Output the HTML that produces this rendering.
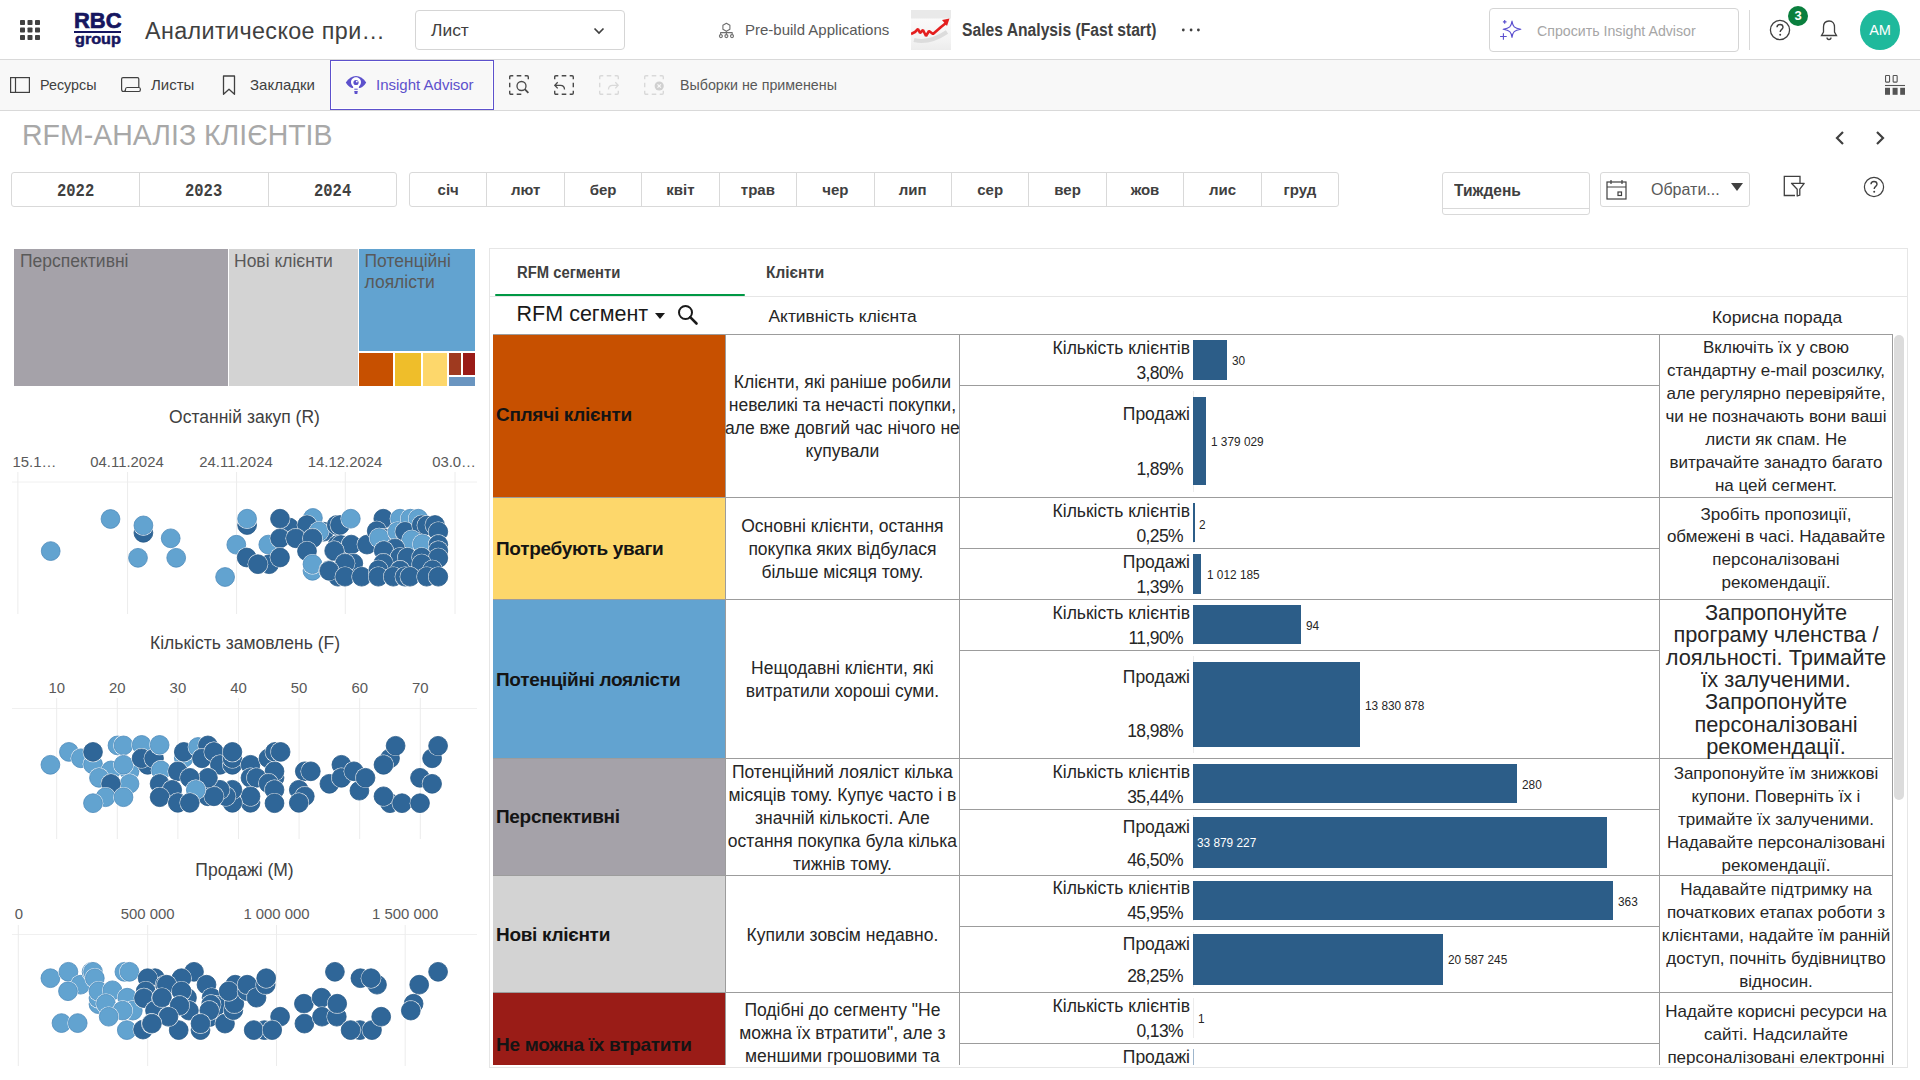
<!DOCTYPE html>
<html><head><meta charset="utf-8">
<style>
*{box-sizing:border-box;margin:0;padding:0}
html,body{width:1920px;height:1080px;overflow:hidden;background:#fff;font-family:"Liberation Sans",sans-serif;color:#404040}
.a{position:absolute;white-space:nowrap}
#hdr{position:absolute;left:0;top:0;width:1920px;height:60px;background:#fff;border-bottom:1px solid #d9d9d9}
#tb{position:absolute;left:0;top:60px;width:1920px;height:51px;background:#f8f8f8;border-bottom:1px solid #d9d9d9}
.btn{position:absolute;border:1px solid #d5d5d5;border-radius:4px;background:#fff}
.seg{position:absolute;top:172px;height:35px;border:1px solid #d9d9d9;border-radius:3px;background:#fff;display:flex}
.seg div{flex:1;border-left:1px solid #d9d9d9;text-align:center;font-weight:bold;font-size:15px;line-height:33px;color:#404040}
.seg div:first-child{border-left:none}
.yr span{display:inline-block;font-family:'Liberation Mono',monospace;font-size:18px;transform:scaleX(0.86) translateY(1px)}
</style></head><body>

<div id="hdr">
  <!-- grid icon -->
  <svg class="a" style="left:20px;top:20px" width="20" height="20" viewBox="0 0 20 20">
    <g fill="#404040">
      <rect x="0" y="0" width="5" height="5" rx="0.8"/><rect x="7.5" y="0" width="5" height="5" rx="0.8"/><rect x="15" y="0" width="5" height="5" rx="0.8"/>
      <rect x="0" y="7.5" width="5" height="5" rx="0.8"/><rect x="7.5" y="7.5" width="5" height="5" rx="0.8"/><rect x="15" y="7.5" width="5" height="5" rx="0.8"/>
      <rect x="0" y="15" width="5" height="5" rx="0.8"/><rect x="7.5" y="15" width="5" height="5" rx="0.8"/><rect x="15" y="15" width="5" height="5" rx="0.8"/>
    </g>
  </svg>
  <!-- RBC logo -->
  <div class="a" style="left:73.5px;top:10px;font-weight:bold;color:#161660;font-size:22.6px;line-height:22px;-webkit-text-stroke:0.7px #161660;transform:scaleX(0.97);transform-origin:0 0">RBC</div>
  <div class="a" style="left:74px;top:31px;width:47px;height:2px;background:#161660"></div>
  <div class="a" style="left:74.5px;top:31px;font-weight:bold;color:#161660;font-size:15px;line-height:15px;-webkit-text-stroke:0.5px #161660;transform:scaleX(1.08);transform-origin:0 0">group</div>
  <div class="a" style="left:145px;top:19.5px;font-size:23.3px;line-height:23.3px;letter-spacing:0.4px;color:#404040">Аналитическое при…</div>
  <!-- Лист dropdown -->
  <div class="btn" style="left:415px;top:10px;width:210px;height:40px"></div>
  <div class="a" style="left:431px;top:21.7px;font-size:17.4px;line-height:17.4px;color:#404040">Лист</div>
  <svg class="a" style="left:593px;top:26px" width="12" height="10" viewBox="0 0 12 10"><path d="M1.5 2.5 L6 7 L10.5 2.5" stroke="#404040" stroke-width="1.7" fill="none"/></svg>
  <!-- prebuild -->
  <svg class="a" style="left:716px;top:20px" width="20" height="20" viewBox="0 0 20 20"><g fill="none" stroke="#6e6e6e" stroke-width="1.1" stroke-linejoin="round"><path d="M10.4 3.2L13.9 5.2V9.2L10.4 11.2L6.9 9.2V5.2Z"/><path d="M10.4 11.2V14.6M4.6 14.6V12.6H16.2V14.6"/><circle cx="4.9" cy="16.1" r="1.5"/><circle cx="10.4" cy="16.1" r="1.5"/><circle cx="16" cy="16.1" r="1.5"/></g></svg>
  <div class="a" style="left:745px;top:21px;font-size:15px;color:#595959">Pre-build Applications</div>
  <!-- thumbnail -->
  <div class="a" style="left:911px;top:10px;width:40px;height:40px;background:linear-gradient(#e9e9e9 0,#e9e9e9 8px,#fafafa 9px,#f3f3f3 30px,#ececec 40px)"></div>
  <svg class="a" style="left:911px;top:10px" width="40" height="40" viewBox="0 0 40 40"><path d="M3 30 Q18 34 36 22" stroke="#dcdcdc" stroke-width="4" fill="none"/><path d="M0 24 L4 22 L7 19 L9 23 L12 20 L15 26 L18 21 L22 24 L30 17 L35 13" stroke="#e41f1f" stroke-width="2.6" fill="none" stroke-linejoin="bevel"/><path d="M31 10 L38.5 8.5 L36 16 Z" fill="#e41f1f"/></svg>
  <div class="a" style="left:962px;top:21px;font-size:18px;line-height:18px;font-weight:bold;color:#404040;transform:scaleX(0.87);transform-origin:0 0">Sales Analysis (Fast start)</div>
  <svg class="a" style="left:1178px;top:25px" width="26" height="10" viewBox="0 0 26 10"><circle cx="5.3" cy="5" r="1.4" fill="#404040"/><circle cx="13.1" cy="5" r="1.4" fill="#404040"/><circle cx="20.4" cy="5" r="1.4" fill="#404040"/></svg>
  <!-- search -->
  <div class="btn" style="left:1489px;top:8px;width:250px;height:44px"></div>
  <svg class="a" style="left:1499px;top:19px" width="26" height="22" viewBox="0 0 26 22"><path d="M13 2.1 C13.8 7.6 15.2 9.3 21.8 10.3 C15.2 11.3 13.8 13 13 18.5 C12.2 13 10.8 11.3 4.2 10.3 C10.8 9.3 12.2 7.6 13 2.1 Z" fill="none" stroke="#5b4fcf" stroke-width="1.1" stroke-linejoin="round"/><path d="M4.4 14.2V20.8M1.1 17.5H7.7" stroke="#5b4fcf" stroke-width="1.1"/><path d="M5.7 1.1V4.7M3.9 2.9H7.5" stroke="#5b4fcf" stroke-width="1.1"/></svg>
  <div class="a" style="left:1536.5px;top:22px;font-size:15px;color:#a6a6a6;transform:scaleX(0.945);transform-origin:0 0">Спросить Insight Advisor</div>
  <div class="a" style="left:1749px;top:10px;width:1px;height:40px;background:#d9d9d9"></div>
  <svg class="a" style="left:1769px;top:19px" width="22" height="22" viewBox="0 0 22 22"><circle cx="11" cy="11" r="9.6" fill="none" stroke="#404040" stroke-width="1.3"/><path d="M8 8.3 C8 6.3 9.5 5.5 11 5.5 C12.7 5.5 14 6.6 14 8.2 C14 10.3 11.2 10.5 11.2 13" fill="none" stroke="#404040" stroke-width="1.4"/><circle cx="11.2" cy="15.8" r="1" fill="#404040"/></svg>
  <div class="a" style="left:1788px;top:6px;width:20px;height:20px;border-radius:10px;background:#0a7f3e;color:#fff;font-size:13px;font-weight:bold;text-align:center;line-height:20px">3</div>
  <svg class="a" style="left:1819px;top:19px" width="20" height="22" viewBox="0 0 20 22"><path d="M10 2 C6 2 4.5 5 4.5 8 V13 L2.5 16.5 H17.5 L15.5 13 V8 C15.5 5 14 2 10 2Z" fill="none" stroke="#404040" stroke-width="1.3"/><path d="M8 18.5 C8 20 9 20.5 10 20.5 C11 20.5 12 20 12 18.5" fill="none" stroke="#404040" stroke-width="1.3"/></svg>
  <div class="a" style="left:1860px;top:10px;width:40px;height:40px;border-radius:20px;background:#1fb99c;color:#fff;font-size:14.5px;text-align:center;line-height:40px">AM</div>
</div>

<div id="tb">
  <svg class="a" style="left:10px;top:17px" width="20" height="16" viewBox="0 0 20 16"><rect x="0.6" y="0.6" width="18.8" height="14.8" fill="none" stroke="#404040" stroke-width="1.2"/><path d="M5.5 0.6V15.4" stroke="#404040" stroke-width="1.2"/></svg>
  <div class="a" style="left:39.5px;top:16px;font-size:15px;color:#404040;transform:scaleX(0.955);transform-origin:0 0">Ресурсы</div>
  <svg class="a" style="left:121px;top:17px" width="20" height="16" viewBox="0 0 20 16"><path d="M2.5 14.5 C1 14.5 0.6 13.5 0.6 12 V2 C0.6 1 1.2 0.6 2 0.6 H16.5 C17.5 0.6 17.8 1.2 17.8 2 V10.5 M2.5 14.5 H18 C19 14.5 19.4 14 19.4 12.5 C19.4 11 19 10.5 18 10.5 H6 C5 10.5 4.5 11 4.5 12.5 C4.5 14 4 14.5 2.5 14.5" fill="none" stroke="#404040" stroke-width="1.2"/></svg>
  <div class="a" style="left:151px;top:16px;font-size:15px;color:#404040">Листы</div>
  <svg class="a" style="left:221px;top:15px" width="16" height="22" viewBox="0 0 16 22"><path d="M2.5 1H13.5V19.3L8 14.3L2.5 19.3Z" fill="none" stroke="#404040" stroke-width="1.3" stroke-linejoin="round"/></svg>
  <div class="a" style="left:250px;top:16px;font-size:15px;color:#404040">Закладки</div>
  <div class="a" style="left:330px;top:0px;width:164px;height:50px;border:1px solid #5d51cc;box-shadow:inset 0 0 0 1px #fff;background:#f8f8f8"></div>
  <svg class="a" style="left:345px;top:14px" width="22" height="22" viewBox="0 0 22 22"><path d="M0.8 8.5 C3.5 4.5 7 2 11 2 C15 2 18.5 4.5 21.2 8.5 C19.5 11.5 17.5 13 15 14 L7 14 C4.5 13 2.5 11.5 0.8 8.5Z" fill="#5d51cc"/><path d="M11 3.2 C14 3.2 16 5.5 16 8.3 C16 10.3 14.8 11.5 14 12.5 L13.5 15.5 L8.5 15.5 L8 12.5 C7.2 11.5 6 10.3 6 8.3 C6 5.5 8 3.2 11 3.2Z" fill="#fff"/><path d="M9.3 15.2 H12.7" stroke="#5d51cc" stroke-width="1"/><circle cx="11" cy="8.5" r="2.6" fill="#5d51cc"/><circle cx="11.8" cy="7.6" r="0.9" fill="#fff"/><path d="M9.2 17 H12.8 L12.3 20 H9.7Z" fill="#5d51cc"/></svg>
  <div class="a" style="left:376px;top:16px;font-size:15px;color:#5d51cc">Insight Advisor</div>
  <g></g>
  <svg class="a" style="left:509px;top:15px;position:absolute" width="22" height="22" viewBox="0 0 22 22"><path d="M0.7 4.3V1.9Q0.7 0.7 1.9 0.7H4.3M7.7 0.7H12.299999999999999M15.700000000000001 0.7H18.1Q19.3 0.7 19.3 1.9V4.3M7.7 19.3H12.299999999999999M4.3 19.3H1.9Q0.7 19.3 0.7 18.1V15.700000000000001M0.7 7.7V12.299999999999999" fill="none" stroke="#4a4a4a" stroke-width="1.4"/><circle cx="12.5" cy="11" r="4.5" fill="none" stroke="#4a4a4a" stroke-width="1.3"/><path d="M15.7 14.2L19.4 17.9" stroke="#4a4a4a" stroke-width="1.8"/></svg>
  <svg class="a" style="left:554px;top:15px;position:absolute" width="22" height="22" viewBox="0 0 22 22"><path d="M0.7 4.3V1.9Q0.7 0.7 1.9 0.7H4.3M7.7 0.7H12.299999999999999M15.700000000000001 0.7H18.1Q19.3 0.7 19.3 1.9V4.3M19.3 7.7V12.299999999999999M19.3 15.700000000000001V18.1Q19.3 19.3 18.1 19.3H15.700000000000001M7.7 19.3H12.299999999999999M4.3 19.3H1.9Q0.7 19.3 0.7 18.1V15.700000000000001" fill="none" stroke="#4a4a4a" stroke-width="1.4"/><path d="M3.7 7.3L0.8 10.3L3.7 13.4M0.8 10.3H6.5C8.5 10.3 10.5 11.5 10.5 14.5" fill="none" stroke="#4a4a4a" stroke-width="1.3"/></svg>
  <svg class="a" style="left:599px;top:15px;position:absolute" width="22" height="22" viewBox="0 0 22 22"><path d="M0.7 4.3V1.9Q0.7 0.7 1.9 0.7H4.3M7.7 0.7H12.299999999999999M15.700000000000001 0.7H18.1Q19.3 0.7 19.3 1.9V4.3M19.3 15.700000000000001V18.1Q19.3 19.3 18.1 19.3H15.700000000000001M7.7 19.3H12.299999999999999M4.3 19.3H1.9Q0.7 19.3 0.7 18.1V15.700000000000001M0.7 7.7V12.299999999999999" fill="none" stroke="#d9d9d9" stroke-width="1.4"/><path d="M16.3 7.3L19.2 10.3L16.3 13.4M19.2 10.3H13.5C11.5 10.3 9.5 11.5 9.5 14.5" fill="none" stroke="#d9d9d9" stroke-width="1.3"/></svg>
  <svg class="a" style="left:644px;top:15px;position:absolute" width="22" height="22" viewBox="0 0 22 22"><path d="M0.7 4.3V1.9Q0.7 0.7 1.9 0.7H4.3M7.7 0.7H12.299999999999999M15.700000000000001 0.7H18.1Q19.3 0.7 19.3 1.9V4.3M19.3 15.700000000000001V18.1Q19.3 19.3 18.1 19.3H15.700000000000001M7.7 19.3H12.299999999999999M4.3 19.3H1.9Q0.7 19.3 0.7 18.1V15.700000000000001M0.7 7.7V12.299999999999999" fill="none" stroke="#d9d9d9" stroke-width="1.4"/><circle cx="15.2" cy="11" r="4.6" fill="#d0d0d0"/><path d="M13.5 9.3L16.9 12.7M16.9 9.3L13.5 12.7" stroke="#f8f8f8" stroke-width="1.2"/></svg>
  <div class="a" style="left:680px;top:16px;font-size:15px;color:#595959;transform:scaleX(0.95);transform-origin:0 0">Выборки не применены</div>
  <svg class="a" style="left:1884px;top:14px" width="22" height="22" viewBox="0 0 22 22"><g fill="none" stroke="#555" stroke-width="1.1"><rect x="1.55" y="1.55" width="4" height="6.6" rx="0.6"/><rect x="9.15" y="1.55" width="4" height="6.6" rx="0.6"/></g><path d="M1 11.5H21" stroke="#555" stroke-width="1.1"/><g fill="#555"><rect x="1" y="13.8" width="5" height="7"/><rect x="8.6" y="13.8" width="5" height="7"/><rect x="16.2" y="13.8" width="4.8" height="7"/></g></svg>
</div>

<!-- sheet title -->
<div class="a" style="left:22px;top:118px;font-size:29.6px;color:#a8a8a8;transform:scaleX(0.962);transform-origin:0 0">RFM-АНАЛІЗ КЛІЄНТІВ</div>
<svg class="a" style="left:1833px;top:130px" width="14" height="16" viewBox="0 0 14 16"><path d="M10 2L4 8L10 14" fill="none" stroke="#404040" stroke-width="2.2"/></svg>
<svg class="a" style="left:1873px;top:130px" width="14" height="16" viewBox="0 0 14 16"><path d="M4 2L10 8L4 14" fill="none" stroke="#404040" stroke-width="2.2"/></svg>

<!-- year / month filters -->
<div class="seg" style="left:11px;width:386px">
  <div class="yr"><span>2022</span></div><div class="yr"><span>2023</span></div><div class="yr"><span>2024</span></div>
</div>
<div class="seg" style="left:409px;width:930px">
  <div>січ</div><div>лют</div><div>бер</div><div>квіт</div><div>трав</div><div>чер</div><div>лип</div><div>сер</div><div>вер</div><div>жов</div><div>лис</div><div>груд</div>
</div>

<div class="a" style="left:1442px;top:172px;width:148px;height:43px;border:1px solid #d9d9d9;border-radius:3px;background:#fff"></div>
<div class="a" style="left:1443px;top:208px;width:146px;height:1px;background:#d9d9d9"></div>
<div class="a" style="left:1454px;top:182px;font-size:16px;font-weight:bold;color:#404040;transform:scaleX(0.97);transform-origin:0 0">Тиждень</div>
<div class="a" style="left:1600px;top:172px;width:150px;height:35px;border:1px solid #d9d9d9;border-radius:3px;background:#fff"></div>
<svg class="a" style="left:1606px;top:179px" width="22" height="22" viewBox="0 0 22 22"><g fill="none" stroke="#404040" stroke-width="1.2"><rect x="1" y="3" width="19" height="17"/><path d="M1 8H20M5 1V5M16 1V5"/><rect x="12" y="13" width="3.5" height="3.5"/></g></svg>
<div class="a" style="left:1651px;top:181px;font-size:16px;color:#595959">Обрати...</div>
<svg class="a" style="left:1730px;top:182px" width="14" height="10" viewBox="0 0 14 10"><path d="M1 1H13L7 9Z" fill="#404040"/></svg>
<svg class="a" style="left:1783px;top:175px" width="24" height="24" viewBox="0 0 24 24"><path d="M17 8V1.3H1.3V20.5H12" fill="none" stroke="#404040" stroke-width="1.3"/><path d="M8.5 8.3H21.2L16.8 14.2V20.2L14.2 21V14.2Z" fill="none" stroke="#404040" stroke-width="1.3" stroke-linejoin="round"/></svg>
<svg class="a" style="left:1863px;top:176px" width="22" height="22" viewBox="0 0 22 22"><circle cx="11" cy="11" r="9.6" fill="none" stroke="#404040" stroke-width="1.2"/><path d="M8 8.3 C8 6.3 9.5 5.5 11 5.5 C12.7 5.5 14 6.6 14 8.2 C14 10.3 11.2 10.5 11.2 13" fill="none" stroke="#404040" stroke-width="1.4"/><circle cx="11.2" cy="15.8" r="1" fill="#404040"/></svg>

<div class="a" style="left:14px;top:249px;width:214px;height:137px;background:#a5a2a9;"></div>
<div class="a" style="left:229px;top:249px;width:129px;height:137px;background:#d3d3d3;"></div>
<div class="a" style="left:359px;top:249px;width:116px;height:102px;background:#62a3d0;"></div>
<div class="a" style="left:359px;top:353px;width:34px;height:33px;background:#c75000;"></div>
<div class="a" style="left:395px;top:353px;width:26px;height:33px;background:#efbe2a;"></div>
<div class="a" style="left:423px;top:353px;width:24px;height:33px;background:#fdd76b;"></div>
<div class="a" style="left:449px;top:353px;width:12px;height:22px;background:#9f3a1f;"></div>
<div class="a" style="left:463px;top:353px;width:12px;height:22px;background:#9a1b17;"></div>
<div class="a" style="left:449px;top:377px;width:26px;height:9px;background:#6a95c0;"></div>
<div class="a" style="left:20.0px;top:253.2px;font-size:17.5px;line-height:17.5px;color:#595959">Перспективні</div>
<div class="a" style="left:234.0px;top:253.2px;font-size:17.5px;line-height:17.5px;color:#595959">Нові клієнти</div>
<div class="a" style="left:364.5px;top:253.2px;font-size:17.5px;line-height:17.5px;color:#595959">Потенційні</div>
<div class="a" style="left:364.5px;top:274.2px;font-size:17.5px;line-height:17.5px;color:#595959">лоялісти</div>
<div class="a" style="left:-55.5px;width:600px;text-align:center;top:408.7px;font-size:17.5px;line-height:17.5px;color:#404040">Останній закуп (R)</div>
<div class="a" style="left:-55.0px;width:600px;text-align:center;top:635.2px;font-size:17.5px;line-height:17.5px;color:#404040">Кількість замовлень (F)</div>
<div class="a" style="left:-55.5px;width:600px;text-align:center;top:862.2px;font-size:17.5px;line-height:17.5px;color:#404040">Продажі (M)</div>
<div class="a" style="left:-173.0px;width:600px;text-align:center;top:455.1px;font-size:14.9px;line-height:14.9px;color:#595959">04.11.2024</div>
<div class="a" style="left:-64.0px;width:600px;text-align:center;top:455.1px;font-size:14.9px;line-height:14.9px;color:#595959">24.11.2024</div>
<div class="a" style="left:45.0px;width:600px;text-align:center;top:455.1px;font-size:14.9px;line-height:14.9px;color:#595959">14.12.2024</div>
<div class="a" style="left:12.5px;top:455.1px;font-size:14.9px;line-height:14.9px;color:#595959">15.1…</div>
<div class="a" style="right:1444.0px;top:455.1px;font-size:14.9px;line-height:14.9px;color:#595959">03.0…</div>
<div class="a" style="left:-243.3px;width:600px;text-align:center;top:681.4px;font-size:14.9px;line-height:14.9px;color:#595959">10</div>
<div class="a" style="left:-182.7px;width:600px;text-align:center;top:681.4px;font-size:14.9px;line-height:14.9px;color:#595959">20</div>
<div class="a" style="left:-122.1px;width:600px;text-align:center;top:681.4px;font-size:14.9px;line-height:14.9px;color:#595959">30</div>
<div class="a" style="left:-61.5px;width:600px;text-align:center;top:681.4px;font-size:14.9px;line-height:14.9px;color:#595959">40</div>
<div class="a" style="left:-0.9px;width:600px;text-align:center;top:681.4px;font-size:14.9px;line-height:14.9px;color:#595959">50</div>
<div class="a" style="left:59.7px;width:600px;text-align:center;top:681.4px;font-size:14.9px;line-height:14.9px;color:#595959">60</div>
<div class="a" style="left:120.3px;width:600px;text-align:center;top:681.4px;font-size:14.9px;line-height:14.9px;color:#595959">70</div>
<div class="a" style="left:-281.0px;width:600px;text-align:center;top:907.4px;font-size:14.9px;line-height:14.9px;color:#595959">0</div>
<div class="a" style="left:-152.3px;width:600px;text-align:center;top:907.4px;font-size:14.9px;line-height:14.9px;color:#595959">500 000</div>
<div class="a" style="left:-23.5px;width:600px;text-align:center;top:907.4px;font-size:14.9px;line-height:14.9px;color:#595959">1 000 000</div>
<div class="a" style="left:105.2px;width:600px;text-align:center;top:907.4px;font-size:14.9px;line-height:14.9px;color:#595959">1 500 000</div>
<svg class="a" style="left:0;top:0" width="490" height="1080">
<line x1="12" y1="482" x2="477" y2="482" stroke="#f0f0f0" stroke-width="1"/>
<line x1="17.9" y1="472" x2="17.9" y2="614" stroke="#ececec" stroke-width="1"/>
<line x1="127.6" y1="472" x2="127.6" y2="614" stroke="#ececec" stroke-width="1"/>
<line x1="236.6" y1="472" x2="236.6" y2="614" stroke="#ececec" stroke-width="1"/>
<line x1="345.3" y1="472" x2="345.3" y2="614" stroke="#ececec" stroke-width="1"/>
<line x1="455" y1="472" x2="455" y2="614" stroke="#ececec" stroke-width="1"/>
<line x1="12" y1="708.5" x2="477" y2="708.5" stroke="#f0f0f0" stroke-width="1"/>
<line x1="56.7" y1="698" x2="56.7" y2="839" stroke="#ececec" stroke-width="1"/>
<line x1="117.30000000000001" y1="698" x2="117.30000000000001" y2="839" stroke="#ececec" stroke-width="1"/>
<line x1="177.9" y1="698" x2="177.9" y2="839" stroke="#ececec" stroke-width="1"/>
<line x1="238.5" y1="698" x2="238.5" y2="839" stroke="#ececec" stroke-width="1"/>
<line x1="299.1" y1="698" x2="299.1" y2="839" stroke="#ececec" stroke-width="1"/>
<line x1="359.7" y1="698" x2="359.7" y2="839" stroke="#ececec" stroke-width="1"/>
<line x1="420.3" y1="698" x2="420.3" y2="839" stroke="#ececec" stroke-width="1"/>
<line x1="12" y1="934.5" x2="477" y2="934.5" stroke="#f0f0f0" stroke-width="1"/>
<line x1="18.3" y1="925" x2="18.3" y2="1066" stroke="#ececec" stroke-width="1"/>
<line x1="147.7" y1="925" x2="147.7" y2="1066" stroke="#ececec" stroke-width="1"/>
<line x1="276.5" y1="925" x2="276.5" y2="1066" stroke="#ececec" stroke-width="1"/>
<line x1="405.2" y1="925" x2="405.2" y2="1066" stroke="#ececec" stroke-width="1"/>
<circle cx="50.7" cy="551.1" r="10.3" fill="#fff"/><circle cx="50.7" cy="551.1" r="9.4" fill="#62a3d0" stroke="#4f8cbb" stroke-width="0.8"/>
<circle cx="110.5" cy="519" r="10.3" fill="#fff"/><circle cx="110.5" cy="519" r="9.4" fill="#62a3d0" stroke="#4f8cbb" stroke-width="0.8"/>
<circle cx="143.4" cy="532.8" r="10.3" fill="#fff"/><circle cx="143.4" cy="532.8" r="9.4" fill="#2f6698" stroke="#285a88" stroke-width="0.8"/>
<circle cx="143.4" cy="525.4" r="10.3" fill="#fff"/><circle cx="143.4" cy="525.4" r="9.4" fill="#62a3d0" stroke="#4f8cbb" stroke-width="0.8"/>
<circle cx="170.7" cy="538.3" r="10.3" fill="#fff"/><circle cx="170.7" cy="538.3" r="9.4" fill="#62a3d0" stroke="#4f8cbb" stroke-width="0.8"/>
<circle cx="138" cy="557.8" r="10.3" fill="#fff"/><circle cx="138" cy="557.8" r="9.4" fill="#62a3d0" stroke="#4f8cbb" stroke-width="0.8"/>
<circle cx="176.2" cy="557.8" r="10.3" fill="#fff"/><circle cx="176.2" cy="557.8" r="9.4" fill="#62a3d0" stroke="#4f8cbb" stroke-width="0.8"/>
<circle cx="225.1" cy="577" r="10.3" fill="#fff"/><circle cx="225.1" cy="577" r="9.4" fill="#62a3d0" stroke="#4f8cbb" stroke-width="0.8"/>
<circle cx="236.3" cy="544.7" r="10.3" fill="#fff"/><circle cx="236.3" cy="544.7" r="9.4" fill="#62a3d0" stroke="#4f8cbb" stroke-width="0.8"/>
<circle cx="247.1" cy="525" r="10.3" fill="#fff"/><circle cx="247.1" cy="525" r="9.4" fill="#2f6698" stroke="#285a88" stroke-width="0.8"/>
<circle cx="247.1" cy="518.7" r="10.3" fill="#fff"/><circle cx="247.1" cy="518.7" r="9.4" fill="#62a3d0" stroke="#4f8cbb" stroke-width="0.8"/>
<circle cx="289.2" cy="527.5" r="10.3" fill="#fff"/><circle cx="289.2" cy="527.5" r="9.4" fill="#2f6698" stroke="#285a88" stroke-width="0.8"/>
<circle cx="280" cy="518.7" r="10.3" fill="#fff"/><circle cx="280" cy="518.7" r="9.4" fill="#2f6698" stroke="#285a88" stroke-width="0.8"/>
<circle cx="312.9" cy="518" r="10.3" fill="#fff"/><circle cx="312.9" cy="518" r="9.4" fill="#62a3d0" stroke="#4f8cbb" stroke-width="0.8"/>
<circle cx="307" cy="525" r="10.3" fill="#fff"/><circle cx="307" cy="525" r="9.4" fill="#2f6698" stroke="#285a88" stroke-width="0.8"/>
<circle cx="323.75" cy="531.7" r="10.3" fill="#fff"/><circle cx="323.75" cy="531.7" r="9.4" fill="#2f6698" stroke="#285a88" stroke-width="0.8"/>
<circle cx="319" cy="531.5" r="10.3" fill="#fff"/><circle cx="319" cy="531.5" r="9.4" fill="#62a3d0" stroke="#4f8cbb" stroke-width="0.8"/>
<circle cx="336.7" cy="525" r="10.3" fill="#fff"/><circle cx="336.7" cy="525" r="9.4" fill="#2f6698" stroke="#285a88" stroke-width="0.8"/>
<circle cx="268.3" cy="544.6" r="10.3" fill="#fff"/><circle cx="268.3" cy="544.6" r="9.4" fill="#62a3d0" stroke="#4f8cbb" stroke-width="0.8"/>
<circle cx="280" cy="538.3" r="10.3" fill="#fff"/><circle cx="280" cy="538.3" r="9.4" fill="#2f6698" stroke="#285a88" stroke-width="0.8"/>
<circle cx="295.8" cy="538.3" r="10.3" fill="#fff"/><circle cx="295.8" cy="538.3" r="9.4" fill="#2f6698" stroke="#285a88" stroke-width="0.8"/>
<circle cx="312.5" cy="538.3" r="10.3" fill="#fff"/><circle cx="312.5" cy="538.3" r="9.4" fill="#2f6698" stroke="#285a88" stroke-width="0.8"/>
<circle cx="246.7" cy="557.5" r="10.3" fill="#fff"/><circle cx="246.7" cy="557.5" r="9.4" fill="#2f6698" stroke="#285a88" stroke-width="0.8"/>
<circle cx="269.2" cy="564.2" r="10.3" fill="#fff"/><circle cx="269.2" cy="564.2" r="9.4" fill="#2f6698" stroke="#285a88" stroke-width="0.8"/>
<circle cx="257.9" cy="564.2" r="10.3" fill="#fff"/><circle cx="257.9" cy="564.2" r="9.4" fill="#2f6698" stroke="#285a88" stroke-width="0.8"/>
<circle cx="280" cy="557.5" r="10.3" fill="#fff"/><circle cx="280" cy="557.5" r="9.4" fill="#2f6698" stroke="#285a88" stroke-width="0.8"/>
<circle cx="307" cy="551.25" r="10.3" fill="#fff"/><circle cx="307" cy="551.25" r="9.4" fill="#2f6698" stroke="#285a88" stroke-width="0.8"/>
<circle cx="312.5" cy="570.8" r="10.3" fill="#fff"/><circle cx="312.5" cy="570.8" r="9.4" fill="#62a3d0" stroke="#4f8cbb" stroke-width="0.8"/>
<circle cx="312.5" cy="564.2" r="10.3" fill="#fff"/><circle cx="312.5" cy="564.2" r="9.4" fill="#62a3d0" stroke="#4f8cbb" stroke-width="0.8"/>
<circle cx="328.75" cy="570.4" r="10.3" fill="#fff"/><circle cx="328.75" cy="570.4" r="9.4" fill="#2f6698" stroke="#285a88" stroke-width="0.8"/>
<circle cx="334.2" cy="551.25" r="10.3" fill="#fff"/><circle cx="334.2" cy="551.25" r="9.4" fill="#2f6698" stroke="#285a88" stroke-width="0.8"/>
<circle cx="337.5" cy="545" r="10.3" fill="#fff"/><circle cx="337.5" cy="545" r="9.4" fill="#2f6698" stroke="#285a88" stroke-width="0.8"/>
<circle cx="338" cy="576.7" r="10.3" fill="#fff"/><circle cx="338" cy="576.7" r="9.4" fill="#2f6698" stroke="#285a88" stroke-width="0.8"/>
<circle cx="340" cy="525" r="10.3" fill="#fff"/><circle cx="340" cy="525" r="9.4" fill="#2f6698" stroke="#285a88" stroke-width="0.8"/>
<circle cx="350.8" cy="518.7" r="10.3" fill="#fff"/><circle cx="350.8" cy="518.7" r="9.4" fill="#62a3d0" stroke="#4f8cbb" stroke-width="0.8"/>
<circle cx="340.8" cy="545" r="10.3" fill="#fff"/><circle cx="340.8" cy="545" r="9.4" fill="#2f6698" stroke="#285a88" stroke-width="0.8"/>
<circle cx="351.25" cy="544.6" r="10.3" fill="#fff"/><circle cx="351.25" cy="544.6" r="9.4" fill="#2f6698" stroke="#285a88" stroke-width="0.8"/>
<circle cx="334.2" cy="550.8" r="10.3" fill="#fff"/><circle cx="334.2" cy="550.8" r="9.4" fill="#2f6698" stroke="#285a88" stroke-width="0.8"/>
<circle cx="367" cy="544.6" r="10.3" fill="#fff"/><circle cx="367" cy="544.6" r="9.4" fill="#2f6698" stroke="#285a88" stroke-width="0.8"/>
<circle cx="353.3" cy="563.3" r="10.3" fill="#fff"/><circle cx="353.3" cy="563.3" r="9.4" fill="#2f6698" stroke="#285a88" stroke-width="0.8"/>
<circle cx="345" cy="563.3" r="10.3" fill="#fff"/><circle cx="345" cy="563.3" r="9.4" fill="#2f6698" stroke="#285a88" stroke-width="0.8"/>
<circle cx="329.2" cy="570.8" r="10.3" fill="#fff"/><circle cx="329.2" cy="570.8" r="9.4" fill="#2f6698" stroke="#285a88" stroke-width="0.8"/>
<circle cx="345" cy="576.7" r="10.3" fill="#fff"/><circle cx="345" cy="576.7" r="9.4" fill="#2f6698" stroke="#285a88" stroke-width="0.8"/>
<circle cx="361.7" cy="576.7" r="10.3" fill="#fff"/><circle cx="361.7" cy="576.7" r="9.4" fill="#2f6698" stroke="#285a88" stroke-width="0.8"/>
<circle cx="383.3" cy="518.7" r="10.3" fill="#fff"/><circle cx="383.3" cy="518.7" r="9.4" fill="#2f6698" stroke="#285a88" stroke-width="0.8"/>
<circle cx="400" cy="518.7" r="10.3" fill="#fff"/><circle cx="400" cy="518.7" r="9.4" fill="#62a3d0" stroke="#4f8cbb" stroke-width="0.8"/>
<circle cx="410.4" cy="518.7" r="10.3" fill="#fff"/><circle cx="410.4" cy="518.7" r="9.4" fill="#62a3d0" stroke="#4f8cbb" stroke-width="0.8"/>
<circle cx="418.3" cy="518.7" r="10.3" fill="#fff"/><circle cx="418.3" cy="518.7" r="9.4" fill="#62a3d0" stroke="#4f8cbb" stroke-width="0.8"/>
<circle cx="376.7" cy="531" r="10.3" fill="#fff"/><circle cx="376.7" cy="531" r="9.4" fill="#2f6698" stroke="#285a88" stroke-width="0.8"/>
<circle cx="384.2" cy="538.3" r="10.3" fill="#fff"/><circle cx="384.2" cy="538.3" r="9.4" fill="#2f6698" stroke="#285a88" stroke-width="0.8"/>
<circle cx="379.2" cy="538" r="10.3" fill="#fff"/><circle cx="379.2" cy="538" r="9.4" fill="#62a3d0" stroke="#4f8cbb" stroke-width="0.8"/>
<circle cx="397.5" cy="531.7" r="10.3" fill="#fff"/><circle cx="397.5" cy="531.7" r="9.4" fill="#62a3d0" stroke="#4f8cbb" stroke-width="0.8"/>
<circle cx="405" cy="531.7" r="10.3" fill="#fff"/><circle cx="405" cy="531.7" r="9.4" fill="#2f6698" stroke="#285a88" stroke-width="0.8"/>
<circle cx="421.7" cy="525" r="10.3" fill="#fff"/><circle cx="421.7" cy="525" r="9.4" fill="#2f6698" stroke="#285a88" stroke-width="0.8"/>
<circle cx="427" cy="525.5" r="10.3" fill="#fff"/><circle cx="427" cy="525.5" r="9.4" fill="#2f6698" stroke="#285a88" stroke-width="0.8"/>
<circle cx="435" cy="525" r="10.3" fill="#fff"/><circle cx="435" cy="525" r="9.4" fill="#2f6698" stroke="#285a88" stroke-width="0.8"/>
<circle cx="438.3" cy="531.7" r="10.3" fill="#fff"/><circle cx="438.3" cy="531.7" r="9.4" fill="#2f6698" stroke="#285a88" stroke-width="0.8"/>
<circle cx="411.7" cy="540" r="10.3" fill="#fff"/><circle cx="411.7" cy="540" r="9.4" fill="#62a3d0" stroke="#4f8cbb" stroke-width="0.8"/>
<circle cx="422.5" cy="544" r="10.3" fill="#fff"/><circle cx="422.5" cy="544" r="9.4" fill="#62a3d0" stroke="#4f8cbb" stroke-width="0.8"/>
<circle cx="438.3" cy="544.6" r="10.3" fill="#fff"/><circle cx="438.3" cy="544.6" r="9.4" fill="#2f6698" stroke="#285a88" stroke-width="0.8"/>
<circle cx="395" cy="548.3" r="10.3" fill="#fff"/><circle cx="395" cy="548.3" r="9.4" fill="#2f6698" stroke="#285a88" stroke-width="0.8"/>
<circle cx="383.75" cy="550.8" r="10.3" fill="#fff"/><circle cx="383.75" cy="550.8" r="9.4" fill="#2f6698" stroke="#285a88" stroke-width="0.8"/>
<circle cx="438.3" cy="550.8" r="10.3" fill="#fff"/><circle cx="438.3" cy="550.8" r="9.4" fill="#2f6698" stroke="#285a88" stroke-width="0.8"/>
<circle cx="400" cy="557.5" r="10.3" fill="#fff"/><circle cx="400" cy="557.5" r="9.4" fill="#2f6698" stroke="#285a88" stroke-width="0.8"/>
<circle cx="407.5" cy="557.5" r="10.3" fill="#fff"/><circle cx="407.5" cy="557.5" r="9.4" fill="#2f6698" stroke="#285a88" stroke-width="0.8"/>
<circle cx="421.7" cy="557.5" r="10.3" fill="#fff"/><circle cx="421.7" cy="557.5" r="9.4" fill="#2f6698" stroke="#285a88" stroke-width="0.8"/>
<circle cx="438.3" cy="558" r="10.3" fill="#fff"/><circle cx="438.3" cy="558" r="9.4" fill="#2f6698" stroke="#285a88" stroke-width="0.8"/>
<circle cx="383.3" cy="563.3" r="10.3" fill="#fff"/><circle cx="383.3" cy="563.3" r="9.4" fill="#2f6698" stroke="#285a88" stroke-width="0.8"/>
<circle cx="421.7" cy="564" r="10.3" fill="#fff"/><circle cx="421.7" cy="564" r="9.4" fill="#2f6698" stroke="#285a88" stroke-width="0.8"/>
<circle cx="378.3" cy="570" r="10.3" fill="#fff"/><circle cx="378.3" cy="570" r="9.4" fill="#2f6698" stroke="#285a88" stroke-width="0.8"/>
<circle cx="400" cy="570.4" r="10.3" fill="#fff"/><circle cx="400" cy="570.4" r="9.4" fill="#2f6698" stroke="#285a88" stroke-width="0.8"/>
<circle cx="432.5" cy="570" r="10.3" fill="#fff"/><circle cx="432.5" cy="570" r="9.4" fill="#2f6698" stroke="#285a88" stroke-width="0.8"/>
<circle cx="378.3" cy="576.7" r="10.3" fill="#fff"/><circle cx="378.3" cy="576.7" r="9.4" fill="#2f6698" stroke="#285a88" stroke-width="0.8"/>
<circle cx="393.3" cy="576.7" r="10.3" fill="#fff"/><circle cx="393.3" cy="576.7" r="9.4" fill="#2f6698" stroke="#285a88" stroke-width="0.8"/>
<circle cx="405" cy="576.7" r="10.3" fill="#fff"/><circle cx="405" cy="576.7" r="9.4" fill="#2f6698" stroke="#285a88" stroke-width="0.8"/>
<circle cx="410" cy="576.7" r="10.3" fill="#fff"/><circle cx="410" cy="576.7" r="9.4" fill="#2f6698" stroke="#285a88" stroke-width="0.8"/>
<circle cx="426.7" cy="576.7" r="10.3" fill="#fff"/><circle cx="426.7" cy="576.7" r="9.4" fill="#2f6698" stroke="#285a88" stroke-width="0.8"/>
<circle cx="438.3" cy="576.7" r="10.3" fill="#fff"/><circle cx="438.3" cy="576.7" r="9.4" fill="#2f6698" stroke="#285a88" stroke-width="0.8"/>
<circle cx="50.4" cy="764.8" r="10.3" fill="#fff"/><circle cx="50.4" cy="764.8" r="9.4" fill="#62a3d0" stroke="#4f8cbb" stroke-width="0.8"/>
<circle cx="68.9" cy="751.9" r="10.3" fill="#fff"/><circle cx="68.9" cy="751.9" r="9.4" fill="#62a3d0" stroke="#4f8cbb" stroke-width="0.8"/>
<circle cx="80.9" cy="758.3" r="10.3" fill="#fff"/><circle cx="80.9" cy="758.3" r="9.4" fill="#62a3d0" stroke="#4f8cbb" stroke-width="0.8"/>
<circle cx="93" cy="764.4" r="10.3" fill="#fff"/><circle cx="93" cy="764.4" r="9.4" fill="#62a3d0" stroke="#4f8cbb" stroke-width="0.8"/>
<circle cx="93" cy="751.9" r="10.3" fill="#fff"/><circle cx="93" cy="751.9" r="9.4" fill="#2f6698" stroke="#285a88" stroke-width="0.8"/>
<circle cx="111" cy="770.4" r="10.3" fill="#fff"/><circle cx="111" cy="770.4" r="9.4" fill="#62a3d0" stroke="#4f8cbb" stroke-width="0.8"/>
<circle cx="99" cy="777.8" r="10.3" fill="#fff"/><circle cx="99" cy="777.8" r="9.4" fill="#62a3d0" stroke="#4f8cbb" stroke-width="0.8"/>
<circle cx="117.5" cy="745.4" r="10.3" fill="#fff"/><circle cx="117.5" cy="745.4" r="9.4" fill="#62a3d0" stroke="#4f8cbb" stroke-width="0.8"/>
<circle cx="123.5" cy="745.4" r="10.3" fill="#fff"/><circle cx="123.5" cy="745.4" r="9.4" fill="#62a3d0" stroke="#4f8cbb" stroke-width="0.8"/>
<circle cx="129.5" cy="771.3" r="10.3" fill="#fff"/><circle cx="129.5" cy="771.3" r="9.4" fill="#62a3d0" stroke="#4f8cbb" stroke-width="0.8"/>
<circle cx="123.5" cy="764.8" r="10.3" fill="#fff"/><circle cx="123.5" cy="764.8" r="9.4" fill="#62a3d0" stroke="#4f8cbb" stroke-width="0.8"/>
<circle cx="129.5" cy="783.8" r="10.3" fill="#fff"/><circle cx="129.5" cy="783.8" r="9.4" fill="#62a3d0" stroke="#4f8cbb" stroke-width="0.8"/>
<circle cx="111" cy="783.8" r="10.3" fill="#fff"/><circle cx="111" cy="783.8" r="9.4" fill="#2f6698" stroke="#285a88" stroke-width="0.8"/>
<circle cx="105.5" cy="797.2" r="10.3" fill="#fff"/><circle cx="105.5" cy="797.2" r="9.4" fill="#62a3d0" stroke="#4f8cbb" stroke-width="0.8"/>
<circle cx="93" cy="803.2" r="10.3" fill="#fff"/><circle cx="93" cy="803.2" r="9.4" fill="#62a3d0" stroke="#4f8cbb" stroke-width="0.8"/>
<circle cx="123.5" cy="797.2" r="10.3" fill="#fff"/><circle cx="123.5" cy="797.2" r="9.4" fill="#62a3d0" stroke="#4f8cbb" stroke-width="0.8"/>
<circle cx="141.6" cy="744.9" r="10.3" fill="#fff"/><circle cx="141.6" cy="744.9" r="9.4" fill="#62a3d0" stroke="#4f8cbb" stroke-width="0.8"/>
<circle cx="147.6" cy="764.8" r="10.3" fill="#fff"/><circle cx="147.6" cy="764.8" r="9.4" fill="#2f6698" stroke="#285a88" stroke-width="0.8"/>
<circle cx="141.6" cy="758.3" r="10.3" fill="#fff"/><circle cx="141.6" cy="758.3" r="9.4" fill="#2f6698" stroke="#285a88" stroke-width="0.8"/>
<circle cx="154" cy="758.3" r="10.3" fill="#fff"/><circle cx="154" cy="758.3" r="9.4" fill="#2f6698" stroke="#285a88" stroke-width="0.8"/>
<circle cx="159.6" cy="744.9" r="10.3" fill="#fff"/><circle cx="159.6" cy="744.9" r="9.4" fill="#62a3d0" stroke="#4f8cbb" stroke-width="0.8"/>
<circle cx="161" cy="770.4" r="10.3" fill="#fff"/><circle cx="161" cy="770.4" r="9.4" fill="#62a3d0" stroke="#4f8cbb" stroke-width="0.8"/>
<circle cx="159.6" cy="783.8" r="10.3" fill="#fff"/><circle cx="159.6" cy="783.8" r="9.4" fill="#2f6698" stroke="#285a88" stroke-width="0.8"/>
<circle cx="159.6" cy="797.2" r="10.3" fill="#fff"/><circle cx="159.6" cy="797.2" r="9.4" fill="#2f6698" stroke="#285a88" stroke-width="0.8"/>
<circle cx="183.8" cy="757.9" r="10.3" fill="#fff"/><circle cx="183.8" cy="757.9" r="9.4" fill="#62a3d0" stroke="#4f8cbb" stroke-width="0.8"/>
<circle cx="183.8" cy="751.9" r="10.3" fill="#fff"/><circle cx="183.8" cy="751.9" r="9.4" fill="#2f6698" stroke="#285a88" stroke-width="0.8"/>
<circle cx="198" cy="747" r="10.3" fill="#fff"/><circle cx="198" cy="747" r="9.4" fill="#62a3d0" stroke="#4f8cbb" stroke-width="0.8"/>
<circle cx="207.9" cy="745.4" r="10.3" fill="#fff"/><circle cx="207.9" cy="745.4" r="9.4" fill="#2f6698" stroke="#285a88" stroke-width="0.8"/>
<circle cx="201.9" cy="758.3" r="10.3" fill="#fff"/><circle cx="201.9" cy="758.3" r="9.4" fill="#2f6698" stroke="#285a88" stroke-width="0.8"/>
<circle cx="213.9" cy="751.9" r="10.3" fill="#fff"/><circle cx="213.9" cy="751.9" r="9.4" fill="#2f6698" stroke="#285a88" stroke-width="0.8"/>
<circle cx="219.9" cy="764.8" r="10.3" fill="#fff"/><circle cx="219.9" cy="764.8" r="9.4" fill="#2f6698" stroke="#285a88" stroke-width="0.8"/>
<circle cx="232.4" cy="764.8" r="10.3" fill="#fff"/><circle cx="232.4" cy="764.8" r="9.4" fill="#2f6698" stroke="#285a88" stroke-width="0.8"/>
<circle cx="232.4" cy="758.3" r="10.3" fill="#fff"/><circle cx="232.4" cy="758.3" r="9.4" fill="#2f6698" stroke="#285a88" stroke-width="0.8"/>
<circle cx="232.4" cy="751.9" r="10.3" fill="#fff"/><circle cx="232.4" cy="751.9" r="9.4" fill="#2f6698" stroke="#285a88" stroke-width="0.8"/>
<circle cx="250.5" cy="764.8" r="10.3" fill="#fff"/><circle cx="250.5" cy="764.8" r="9.4" fill="#2f6698" stroke="#285a88" stroke-width="0.8"/>
<circle cx="268.5" cy="758.3" r="10.3" fill="#fff"/><circle cx="268.5" cy="758.3" r="9.4" fill="#2f6698" stroke="#285a88" stroke-width="0.8"/>
<circle cx="275" cy="751.9" r="10.3" fill="#fff"/><circle cx="275" cy="751.9" r="9.4" fill="#2f6698" stroke="#285a88" stroke-width="0.8"/>
<circle cx="280.6" cy="751.9" r="10.3" fill="#fff"/><circle cx="280.6" cy="751.9" r="9.4" fill="#2f6698" stroke="#285a88" stroke-width="0.8"/>
<circle cx="274.5" cy="777.8" r="10.3" fill="#fff"/><circle cx="274.5" cy="777.8" r="9.4" fill="#2f6698" stroke="#285a88" stroke-width="0.8"/>
<circle cx="274.5" cy="771.3" r="10.3" fill="#fff"/><circle cx="274.5" cy="771.3" r="9.4" fill="#2f6698" stroke="#285a88" stroke-width="0.8"/>
<circle cx="250.5" cy="777.8" r="10.3" fill="#fff"/><circle cx="250.5" cy="777.8" r="9.4" fill="#2f6698" stroke="#285a88" stroke-width="0.8"/>
<circle cx="256.5" cy="777.8" r="10.3" fill="#fff"/><circle cx="256.5" cy="777.8" r="9.4" fill="#2f6698" stroke="#285a88" stroke-width="0.8"/>
<circle cx="268.5" cy="783.3" r="10.3" fill="#fff"/><circle cx="268.5" cy="783.3" r="9.4" fill="#2f6698" stroke="#285a88" stroke-width="0.8"/>
<circle cx="274.5" cy="789.8" r="10.3" fill="#fff"/><circle cx="274.5" cy="789.8" r="9.4" fill="#2f6698" stroke="#285a88" stroke-width="0.8"/>
<circle cx="274.5" cy="803.2" r="10.3" fill="#fff"/><circle cx="274.5" cy="803.2" r="9.4" fill="#2f6698" stroke="#285a88" stroke-width="0.8"/>
<circle cx="250.5" cy="802.8" r="10.3" fill="#fff"/><circle cx="250.5" cy="802.8" r="9.4" fill="#2f6698" stroke="#285a88" stroke-width="0.8"/>
<circle cx="250.5" cy="796.3" r="10.3" fill="#fff"/><circle cx="250.5" cy="796.3" r="9.4" fill="#2f6698" stroke="#285a88" stroke-width="0.8"/>
<circle cx="232.4" cy="802.8" r="10.3" fill="#fff"/><circle cx="232.4" cy="802.8" r="9.4" fill="#2f6698" stroke="#285a88" stroke-width="0.8"/>
<circle cx="232.4" cy="789.8" r="10.3" fill="#fff"/><circle cx="232.4" cy="789.8" r="9.4" fill="#2f6698" stroke="#285a88" stroke-width="0.8"/>
<circle cx="225.9" cy="796.3" r="10.3" fill="#fff"/><circle cx="225.9" cy="796.3" r="9.4" fill="#2f6698" stroke="#285a88" stroke-width="0.8"/>
<circle cx="219.9" cy="789.8" r="10.3" fill="#fff"/><circle cx="219.9" cy="789.8" r="9.4" fill="#2f6698" stroke="#285a88" stroke-width="0.8"/>
<circle cx="207.9" cy="796.3" r="10.3" fill="#fff"/><circle cx="207.9" cy="796.3" r="9.4" fill="#2f6698" stroke="#285a88" stroke-width="0.8"/>
<circle cx="213.9" cy="796.3" r="10.3" fill="#fff"/><circle cx="213.9" cy="796.3" r="9.4" fill="#2f6698" stroke="#285a88" stroke-width="0.8"/>
<circle cx="207.9" cy="777.8" r="10.3" fill="#fff"/><circle cx="207.9" cy="777.8" r="9.4" fill="#2f6698" stroke="#285a88" stroke-width="0.8"/>
<circle cx="177.8" cy="771.3" r="10.3" fill="#fff"/><circle cx="177.8" cy="771.3" r="9.4" fill="#2f6698" stroke="#285a88" stroke-width="0.8"/>
<circle cx="189.8" cy="777.8" r="10.3" fill="#fff"/><circle cx="189.8" cy="777.8" r="9.4" fill="#2f6698" stroke="#285a88" stroke-width="0.8"/>
<circle cx="195.8" cy="789.8" r="10.3" fill="#fff"/><circle cx="195.8" cy="789.8" r="9.4" fill="#62a3d0" stroke="#4f8cbb" stroke-width="0.8"/>
<circle cx="172.2" cy="789.8" r="10.3" fill="#fff"/><circle cx="172.2" cy="789.8" r="9.4" fill="#2f6698" stroke="#285a88" stroke-width="0.8"/>
<circle cx="159.7" cy="797.2" r="10.3" fill="#fff"/><circle cx="159.7" cy="797.2" r="9.4" fill="#2f6698" stroke="#285a88" stroke-width="0.8"/>
<circle cx="177.8" cy="802.8" r="10.3" fill="#fff"/><circle cx="177.8" cy="802.8" r="9.4" fill="#2f6698" stroke="#285a88" stroke-width="0.8"/>
<circle cx="189.8" cy="802.8" r="10.3" fill="#fff"/><circle cx="189.8" cy="802.8" r="9.4" fill="#2f6698" stroke="#285a88" stroke-width="0.8"/>
<circle cx="304.8" cy="771.3" r="10.3" fill="#fff"/><circle cx="304.8" cy="771.3" r="9.4" fill="#2f6698" stroke="#285a88" stroke-width="0.8"/>
<circle cx="310.8" cy="771.3" r="10.3" fill="#fff"/><circle cx="310.8" cy="771.3" r="9.4" fill="#2f6698" stroke="#285a88" stroke-width="0.8"/>
<circle cx="298.8" cy="789.8" r="10.3" fill="#fff"/><circle cx="298.8" cy="789.8" r="9.4" fill="#2f6698" stroke="#285a88" stroke-width="0.8"/>
<circle cx="304.8" cy="796.3" r="10.3" fill="#fff"/><circle cx="304.8" cy="796.3" r="9.4" fill="#2f6698" stroke="#285a88" stroke-width="0.8"/>
<circle cx="298.8" cy="802.8" r="10.3" fill="#fff"/><circle cx="298.8" cy="802.8" r="9.4" fill="#2f6698" stroke="#285a88" stroke-width="0.8"/>
<circle cx="329.4" cy="783.8" r="10.3" fill="#fff"/><circle cx="329.4" cy="783.8" r="9.4" fill="#2f6698" stroke="#285a88" stroke-width="0.8"/>
<circle cx="341.4" cy="764.8" r="10.3" fill="#fff"/><circle cx="341.4" cy="764.8" r="9.4" fill="#2f6698" stroke="#285a88" stroke-width="0.8"/>
<circle cx="341.4" cy="777.8" r="10.3" fill="#fff"/><circle cx="341.4" cy="777.8" r="9.4" fill="#2f6698" stroke="#285a88" stroke-width="0.8"/>
<circle cx="353.9" cy="771.3" r="10.3" fill="#fff"/><circle cx="353.9" cy="771.3" r="9.4" fill="#2f6698" stroke="#285a88" stroke-width="0.8"/>
<circle cx="359.4" cy="790.7" r="10.3" fill="#fff"/><circle cx="359.4" cy="790.7" r="9.4" fill="#2f6698" stroke="#285a88" stroke-width="0.8"/>
<circle cx="365.5" cy="777.8" r="10.3" fill="#fff"/><circle cx="365.5" cy="777.8" r="9.4" fill="#2f6698" stroke="#285a88" stroke-width="0.8"/>
<circle cx="390" cy="758.3" r="10.3" fill="#fff"/><circle cx="390" cy="758.3" r="9.4" fill="#2f6698" stroke="#285a88" stroke-width="0.8"/>
<circle cx="395.6" cy="745.8" r="10.3" fill="#fff"/><circle cx="395.6" cy="745.8" r="9.4" fill="#2f6698" stroke="#285a88" stroke-width="0.8"/>
<circle cx="383.5" cy="764.8" r="10.3" fill="#fff"/><circle cx="383.5" cy="764.8" r="9.4" fill="#2f6698" stroke="#285a88" stroke-width="0.8"/>
<circle cx="390" cy="803.2" r="10.3" fill="#fff"/><circle cx="390" cy="803.2" r="9.4" fill="#2f6698" stroke="#285a88" stroke-width="0.8"/>
<circle cx="383.5" cy="796.3" r="10.3" fill="#fff"/><circle cx="383.5" cy="796.3" r="9.4" fill="#2f6698" stroke="#285a88" stroke-width="0.8"/>
<circle cx="402" cy="803.2" r="10.3" fill="#fff"/><circle cx="402" cy="803.2" r="9.4" fill="#2f6698" stroke="#285a88" stroke-width="0.8"/>
<circle cx="420" cy="803.2" r="10.3" fill="#fff"/><circle cx="420" cy="803.2" r="9.4" fill="#2f6698" stroke="#285a88" stroke-width="0.8"/>
<circle cx="420" cy="777.8" r="10.3" fill="#fff"/><circle cx="420" cy="777.8" r="9.4" fill="#2f6698" stroke="#285a88" stroke-width="0.8"/>
<circle cx="432.1" cy="783.8" r="10.3" fill="#fff"/><circle cx="432.1" cy="783.8" r="9.4" fill="#2f6698" stroke="#285a88" stroke-width="0.8"/>
<circle cx="432.1" cy="758.3" r="10.3" fill="#fff"/><circle cx="432.1" cy="758.3" r="9.4" fill="#2f6698" stroke="#285a88" stroke-width="0.8"/>
<circle cx="438.1" cy="745.8" r="10.3" fill="#fff"/><circle cx="438.1" cy="745.8" r="9.4" fill="#2f6698" stroke="#285a88" stroke-width="0.8"/>
<circle cx="50.4" cy="978.2" r="10.3" fill="#fff"/><circle cx="50.4" cy="978.2" r="9.4" fill="#62a3d0" stroke="#4f8cbb" stroke-width="0.8"/>
<circle cx="68.4" cy="971.8" r="10.3" fill="#fff"/><circle cx="68.4" cy="971.8" r="9.4" fill="#62a3d0" stroke="#4f8cbb" stroke-width="0.8"/>
<circle cx="80.5" cy="984.7" r="10.3" fill="#fff"/><circle cx="80.5" cy="984.7" r="9.4" fill="#62a3d0" stroke="#4f8cbb" stroke-width="0.8"/>
<circle cx="68" cy="991.2" r="10.3" fill="#fff"/><circle cx="68" cy="991.2" r="9.4" fill="#62a3d0" stroke="#4f8cbb" stroke-width="0.8"/>
<circle cx="91.6" cy="971.8" r="10.3" fill="#fff"/><circle cx="91.6" cy="971.8" r="9.4" fill="#62a3d0" stroke="#4f8cbb" stroke-width="0.8"/>
<circle cx="93" cy="971.8" r="10.3" fill="#fff"/><circle cx="93" cy="971.8" r="9.4" fill="#62a3d0" stroke="#4f8cbb" stroke-width="0.8"/>
<circle cx="94.8" cy="978.2" r="10.3" fill="#fff"/><circle cx="94.8" cy="978.2" r="9.4" fill="#62a3d0" stroke="#4f8cbb" stroke-width="0.8"/>
<circle cx="98.5" cy="1004.2" r="10.3" fill="#fff"/><circle cx="98.5" cy="1004.2" r="9.4" fill="#62a3d0" stroke="#4f8cbb" stroke-width="0.8"/>
<circle cx="98.5" cy="998.1" r="10.3" fill="#fff"/><circle cx="98.5" cy="998.1" r="9.4" fill="#62a3d0" stroke="#4f8cbb" stroke-width="0.8"/>
<circle cx="98.5" cy="991.2" r="10.3" fill="#fff"/><circle cx="98.5" cy="991.2" r="9.4" fill="#62a3d0" stroke="#4f8cbb" stroke-width="0.8"/>
<circle cx="112.4" cy="990.3" r="10.3" fill="#fff"/><circle cx="112.4" cy="990.3" r="9.4" fill="#62a3d0" stroke="#4f8cbb" stroke-width="0.8"/>
<circle cx="105.9" cy="1003.7" r="10.3" fill="#fff"/><circle cx="105.9" cy="1003.7" r="9.4" fill="#62a3d0" stroke="#4f8cbb" stroke-width="0.8"/>
<circle cx="124.4" cy="971.8" r="10.3" fill="#fff"/><circle cx="124.4" cy="971.8" r="9.4" fill="#62a3d0" stroke="#4f8cbb" stroke-width="0.8"/>
<circle cx="129.5" cy="971.8" r="10.3" fill="#fff"/><circle cx="129.5" cy="971.8" r="9.4" fill="#62a3d0" stroke="#4f8cbb" stroke-width="0.8"/>
<circle cx="127.2" cy="997.7" r="10.3" fill="#fff"/><circle cx="127.2" cy="997.7" r="9.4" fill="#62a3d0" stroke="#4f8cbb" stroke-width="0.8"/>
<circle cx="132.8" cy="1010.6" r="10.3" fill="#fff"/><circle cx="132.8" cy="1010.6" r="9.4" fill="#62a3d0" stroke="#4f8cbb" stroke-width="0.8"/>
<circle cx="122.6" cy="1010.6" r="10.3" fill="#fff"/><circle cx="122.6" cy="1010.6" r="9.4" fill="#62a3d0" stroke="#4f8cbb" stroke-width="0.8"/>
<circle cx="108.7" cy="1016.7" r="10.3" fill="#fff"/><circle cx="108.7" cy="1016.7" r="9.4" fill="#62a3d0" stroke="#4f8cbb" stroke-width="0.8"/>
<circle cx="126.8" cy="1030.1" r="10.3" fill="#fff"/><circle cx="126.8" cy="1030.1" r="9.4" fill="#62a3d0" stroke="#4f8cbb" stroke-width="0.8"/>
<circle cx="61.5" cy="1023.1" r="10.3" fill="#fff"/><circle cx="61.5" cy="1023.1" r="9.4" fill="#62a3d0" stroke="#4f8cbb" stroke-width="0.8"/>
<circle cx="77.7" cy="1023.1" r="10.3" fill="#fff"/><circle cx="77.7" cy="1023.1" r="9.4" fill="#62a3d0" stroke="#4f8cbb" stroke-width="0.8"/>
<circle cx="155" cy="978.2" r="10.3" fill="#fff"/><circle cx="155" cy="978.2" r="9.4" fill="#2f6698" stroke="#285a88" stroke-width="0.8"/>
<circle cx="147.6" cy="978.2" r="10.3" fill="#fff"/><circle cx="147.6" cy="978.2" r="9.4" fill="#2f6698" stroke="#285a88" stroke-width="0.8"/>
<circle cx="165.2" cy="984.7" r="10.3" fill="#fff"/><circle cx="165.2" cy="984.7" r="9.4" fill="#2f6698" stroke="#285a88" stroke-width="0.8"/>
<circle cx="145.7" cy="991.2" r="10.3" fill="#fff"/><circle cx="145.7" cy="991.2" r="9.4" fill="#2f6698" stroke="#285a88" stroke-width="0.8"/>
<circle cx="143.9" cy="998.1" r="10.3" fill="#fff"/><circle cx="143.9" cy="998.1" r="9.4" fill="#2f6698" stroke="#285a88" stroke-width="0.8"/>
<circle cx="161.5" cy="998.1" r="10.3" fill="#fff"/><circle cx="161.5" cy="998.1" r="9.4" fill="#2f6698" stroke="#285a88" stroke-width="0.8"/>
<circle cx="155" cy="1010.6" r="10.3" fill="#fff"/><circle cx="155" cy="1010.6" r="9.4" fill="#2f6698" stroke="#285a88" stroke-width="0.8"/>
<circle cx="168" cy="1016.7" r="10.3" fill="#fff"/><circle cx="168" cy="1016.7" r="9.4" fill="#2f6698" stroke="#285a88" stroke-width="0.8"/>
<circle cx="143" cy="1029.6" r="10.3" fill="#fff"/><circle cx="143" cy="1029.6" r="9.4" fill="#2f6698" stroke="#285a88" stroke-width="0.8"/>
<circle cx="151.3" cy="1023.6" r="10.3" fill="#fff"/><circle cx="151.3" cy="1023.6" r="9.4" fill="#2f6698" stroke="#285a88" stroke-width="0.8"/>
<circle cx="194" cy="971.8" r="10.3" fill="#fff"/><circle cx="194" cy="971.8" r="9.4" fill="#2f6698" stroke="#285a88" stroke-width="0.8"/>
<circle cx="181.5" cy="978.2" r="10.3" fill="#fff"/><circle cx="181.5" cy="978.2" r="9.4" fill="#2f6698" stroke="#285a88" stroke-width="0.8"/>
<circle cx="166.7" cy="984.7" r="10.3" fill="#fff"/><circle cx="166.7" cy="984.7" r="9.4" fill="#2f6698" stroke="#285a88" stroke-width="0.8"/>
<circle cx="206.5" cy="984.7" r="10.3" fill="#fff"/><circle cx="206.5" cy="984.7" r="9.4" fill="#2f6698" stroke="#285a88" stroke-width="0.8"/>
<circle cx="187" cy="997.7" r="10.3" fill="#fff"/><circle cx="187" cy="997.7" r="9.4" fill="#2f6698" stroke="#285a88" stroke-width="0.8"/>
<circle cx="181.5" cy="991.2" r="10.3" fill="#fff"/><circle cx="181.5" cy="991.2" r="9.4" fill="#2f6698" stroke="#285a88" stroke-width="0.8"/>
<circle cx="162" cy="997.7" r="10.3" fill="#fff"/><circle cx="162" cy="997.7" r="9.4" fill="#2f6698" stroke="#285a88" stroke-width="0.8"/>
<circle cx="188.9" cy="1010.6" r="10.3" fill="#fff"/><circle cx="188.9" cy="1010.6" r="9.4" fill="#2f6698" stroke="#285a88" stroke-width="0.8"/>
<circle cx="179.6" cy="1005.6" r="10.3" fill="#fff"/><circle cx="179.6" cy="1005.6" r="9.4" fill="#2f6698" stroke="#285a88" stroke-width="0.8"/>
<circle cx="211.6" cy="997.7" r="10.3" fill="#fff"/><circle cx="211.6" cy="997.7" r="9.4" fill="#2f6698" stroke="#285a88" stroke-width="0.8"/>
<circle cx="216.7" cy="1005.6" r="10.3" fill="#fff"/><circle cx="216.7" cy="1005.6" r="9.4" fill="#2f6698" stroke="#285a88" stroke-width="0.8"/>
<circle cx="211" cy="1004.6" r="10.3" fill="#fff"/><circle cx="211" cy="1004.6" r="9.4" fill="#2f6698" stroke="#285a88" stroke-width="0.8"/>
<circle cx="200.5" cy="1030.1" r="10.3" fill="#fff"/><circle cx="200.5" cy="1030.1" r="9.4" fill="#2f6698" stroke="#285a88" stroke-width="0.8"/>
<circle cx="209.3" cy="1017.1" r="10.3" fill="#fff"/><circle cx="209.3" cy="1017.1" r="9.4" fill="#2f6698" stroke="#285a88" stroke-width="0.8"/>
<circle cx="209.3" cy="1010.6" r="10.3" fill="#fff"/><circle cx="209.3" cy="1010.6" r="9.4" fill="#2f6698" stroke="#285a88" stroke-width="0.8"/>
<circle cx="200.5" cy="1023.6" r="10.3" fill="#fff"/><circle cx="200.5" cy="1023.6" r="9.4" fill="#2f6698" stroke="#285a88" stroke-width="0.8"/>
<circle cx="178.7" cy="1030.1" r="10.3" fill="#fff"/><circle cx="178.7" cy="1030.1" r="9.4" fill="#2f6698" stroke="#285a88" stroke-width="0.8"/>
<circle cx="168.5" cy="1016.7" r="10.3" fill="#fff"/><circle cx="168.5" cy="1016.7" r="9.4" fill="#2f6698" stroke="#285a88" stroke-width="0.8"/>
<circle cx="151.9" cy="1023.6" r="10.3" fill="#fff"/><circle cx="151.9" cy="1023.6" r="9.4" fill="#2f6698" stroke="#285a88" stroke-width="0.8"/>
<circle cx="225" cy="1023.6" r="10.3" fill="#fff"/><circle cx="225" cy="1023.6" r="9.4" fill="#2f6698" stroke="#285a88" stroke-width="0.8"/>
<circle cx="233.3" cy="1010.2" r="10.3" fill="#fff"/><circle cx="233.3" cy="1010.2" r="9.4" fill="#2f6698" stroke="#285a88" stroke-width="0.8"/>
<circle cx="234.3" cy="1003.7" r="10.3" fill="#fff"/><circle cx="234.3" cy="1003.7" r="9.4" fill="#2f6698" stroke="#285a88" stroke-width="0.8"/>
<circle cx="235.2" cy="984.7" r="10.3" fill="#fff"/><circle cx="235.2" cy="984.7" r="9.4" fill="#2f6698" stroke="#285a88" stroke-width="0.8"/>
<circle cx="228.7" cy="991.2" r="10.3" fill="#fff"/><circle cx="228.7" cy="991.2" r="9.4" fill="#2f6698" stroke="#285a88" stroke-width="0.8"/>
<circle cx="247.2" cy="991.2" r="10.3" fill="#fff"/><circle cx="247.2" cy="991.2" r="9.4" fill="#2f6698" stroke="#285a88" stroke-width="0.8"/>
<circle cx="247.2" cy="984.7" r="10.3" fill="#fff"/><circle cx="247.2" cy="984.7" r="9.4" fill="#2f6698" stroke="#285a88" stroke-width="0.8"/>
<circle cx="256.5" cy="997.7" r="10.3" fill="#fff"/><circle cx="256.5" cy="997.7" r="9.4" fill="#2f6698" stroke="#285a88" stroke-width="0.8"/>
<circle cx="265.7" cy="984.7" r="10.3" fill="#fff"/><circle cx="265.7" cy="984.7" r="9.4" fill="#2f6698" stroke="#285a88" stroke-width="0.8"/>
<circle cx="266.2" cy="978.2" r="10.3" fill="#fff"/><circle cx="266.2" cy="978.2" r="9.4" fill="#2f6698" stroke="#285a88" stroke-width="0.8"/>
<circle cx="280.1" cy="1016.7" r="10.3" fill="#fff"/><circle cx="280.1" cy="1016.7" r="9.4" fill="#2f6698" stroke="#285a88" stroke-width="0.8"/>
<circle cx="264.4" cy="1030.1" r="10.3" fill="#fff"/><circle cx="264.4" cy="1030.1" r="9.4" fill="#2f6698" stroke="#285a88" stroke-width="0.8"/>
<circle cx="253.7" cy="1030.1" r="10.3" fill="#fff"/><circle cx="253.7" cy="1030.1" r="9.4" fill="#2f6698" stroke="#285a88" stroke-width="0.8"/>
<circle cx="272.2" cy="1030.1" r="10.3" fill="#fff"/><circle cx="272.2" cy="1030.1" r="9.4" fill="#2f6698" stroke="#285a88" stroke-width="0.8"/>
<circle cx="303.9" cy="1003.7" r="10.3" fill="#fff"/><circle cx="303.9" cy="1003.7" r="9.4" fill="#2f6698" stroke="#285a88" stroke-width="0.8"/>
<circle cx="321.5" cy="997.7" r="10.3" fill="#fff"/><circle cx="321.5" cy="997.7" r="9.4" fill="#2f6698" stroke="#285a88" stroke-width="0.8"/>
<circle cx="304.4" cy="1023.6" r="10.3" fill="#fff"/><circle cx="304.4" cy="1023.6" r="9.4" fill="#2f6698" stroke="#285a88" stroke-width="0.8"/>
<circle cx="322" cy="1016.7" r="10.3" fill="#fff"/><circle cx="322" cy="1016.7" r="9.4" fill="#2f6698" stroke="#285a88" stroke-width="0.8"/>
<circle cx="336.8" cy="1016.7" r="10.3" fill="#fff"/><circle cx="336.8" cy="1016.7" r="9.4" fill="#2f6698" stroke="#285a88" stroke-width="0.8"/>
<circle cx="337.2" cy="1003.7" r="10.3" fill="#fff"/><circle cx="337.2" cy="1003.7" r="9.4" fill="#2f6698" stroke="#285a88" stroke-width="0.8"/>
<circle cx="334.9" cy="971.8" r="10.3" fill="#fff"/><circle cx="334.9" cy="971.8" r="9.4" fill="#2f6698" stroke="#285a88" stroke-width="0.8"/>
<circle cx="360.4" cy="978.2" r="10.3" fill="#fff"/><circle cx="360.4" cy="978.2" r="9.4" fill="#2f6698" stroke="#285a88" stroke-width="0.8"/>
<circle cx="377" cy="984.7" r="10.3" fill="#fff"/><circle cx="377" cy="984.7" r="9.4" fill="#2f6698" stroke="#285a88" stroke-width="0.8"/>
<circle cx="371" cy="978.2" r="10.3" fill="#fff"/><circle cx="371" cy="978.2" r="9.4" fill="#2f6698" stroke="#285a88" stroke-width="0.8"/>
<circle cx="359.9" cy="1030.1" r="10.3" fill="#fff"/><circle cx="359.9" cy="1030.1" r="9.4" fill="#2f6698" stroke="#285a88" stroke-width="0.8"/>
<circle cx="350.6" cy="1030.1" r="10.3" fill="#fff"/><circle cx="350.6" cy="1030.1" r="9.4" fill="#2f6698" stroke="#285a88" stroke-width="0.8"/>
<circle cx="372" cy="1030.1" r="10.3" fill="#fff"/><circle cx="372" cy="1030.1" r="9.4" fill="#2f6698" stroke="#285a88" stroke-width="0.8"/>
<circle cx="381.2" cy="1016.7" r="10.3" fill="#fff"/><circle cx="381.2" cy="1016.7" r="9.4" fill="#2f6698" stroke="#285a88" stroke-width="0.8"/>
<circle cx="419.2" cy="984.7" r="10.3" fill="#fff"/><circle cx="419.2" cy="984.7" r="9.4" fill="#2f6698" stroke="#285a88" stroke-width="0.8"/>
<circle cx="438.1" cy="971.8" r="10.3" fill="#fff"/><circle cx="438.1" cy="971.8" r="9.4" fill="#2f6698" stroke="#285a88" stroke-width="0.8"/>
<circle cx="413.6" cy="1003.7" r="10.3" fill="#fff"/><circle cx="413.6" cy="1003.7" r="9.4" fill="#2f6698" stroke="#285a88" stroke-width="0.8"/>
<circle cx="410.8" cy="1010.6" r="10.3" fill="#fff"/><circle cx="410.8" cy="1010.6" r="9.4" fill="#2f6698" stroke="#285a88" stroke-width="0.8"/>
</svg><div class="a" style="left:489px;top:248px;width:1419px;height:820px;border:1px solid #e6e6e6;background:#fff"></div>
<div class="a" style="left:516.6px;top:264.5px;font-size:16px;line-height:16px;font-weight:bold;color:#404040;transform:scaleX(0.925);transform-origin:0 0">RFM сегменти</div>
<div class="a" style="left:766.0px;top:264.5px;font-size:16px;line-height:16px;font-weight:bold;color:#404040;transform:scaleX(0.963);transform-origin:0 0">Клієнти</div>
<div class="a" style="left:490px;top:296px;width:1417px;height:1px;background:#e6e6e6;"></div>
<div class="a" style="left:495px;top:294px;width:250px;height:2px;background:#009845;border-radius:1px"></div>
<div class="a" style="left:516.6px;top:303.5px;font-size:21.5px;line-height:21.5px;color:#1a1a1a">RFM сегмент</div>
<svg class="a" style="left:654px;top:311px" width="12" height="10" viewBox="0 0 12 10"><path d="M1 2H11L6 8Z" fill="#1a1a1a"/></svg>
<svg class="a" style="left:677px;top:304px" width="22" height="22" viewBox="0 0 22 22"><circle cx="8.5" cy="8.5" r="6.5" fill="none" stroke="#1a1a1a" stroke-width="2"/><path d="M13.2 13.2L19.5 19.5" stroke="#1a1a1a" stroke-width="2.6" stroke-linecap="round"/></svg>
<div class="a" style="left:768.5px;top:308.3px;font-size:17.4px;line-height:17.4px;color:#262626">Активність клієнта</div>
<div class="a" style="left:1477.0px;width:600px;text-align:center;top:308.8px;font-size:17.4px;line-height:17.4px;color:#262626">Корисна порада</div>
<div class="a" style="left:0;top:0;width:1920px;height:1065px;overflow:hidden">
<div class="a" style="left:493px;top:335px;width:232px;height:162px;background:#c75000;"></div>
<div class="a" style="left:496.0px;top:405.4px;font-size:19px;line-height:19px;font-weight:bold;color:#141414;letter-spacing:-0.3px">Сплячі клієнти</div>
<div class="a" style="left:493px;top:497px;width:232px;height:102px;background:#fdd76b;"></div>
<div class="a" style="left:496.0px;top:538.9px;font-size:19px;line-height:19px;font-weight:bold;color:#141414;letter-spacing:-0.3px">Потребують уваги</div>
<div class="a" style="left:493px;top:599px;width:232px;height:159px;background:#62a3d0;"></div>
<div class="a" style="left:496.0px;top:669.5px;font-size:19px;line-height:19px;font-weight:bold;color:#141414;letter-spacing:-0.3px">Потенційні лоялісти</div>
<div class="a" style="left:493px;top:758px;width:232px;height:117px;background:#a5a2a9;"></div>
<div class="a" style="left:496.0px;top:807.2px;font-size:19px;line-height:19px;font-weight:bold;color:#141414;letter-spacing:-0.3px">Перспективні</div>
<div class="a" style="left:493px;top:875px;width:232px;height:117px;background:#d3d3d3;"></div>
<div class="a" style="left:496.0px;top:924.9px;font-size:19px;line-height:19px;font-weight:bold;color:#141414;letter-spacing:-0.3px">Нові клієнти</div>
<div class="a" style="left:493px;top:992px;width:232px;height:118px;background:#9a1c17;"></div>
<div class="a" style="left:496.0px;top:1034.6px;font-size:19px;line-height:19px;font-weight:bold;color:#141414;letter-spacing:-0.3px">Не можна їх втратити</div>
<div class="a" style="left:493px;top:334px;width:1400px;height:1px;background:#9c9c9c;"></div>
<div class="a" style="left:493px;top:497px;width:1400px;height:1px;background:#9c9c9c;"></div>
<div class="a" style="left:493px;top:599px;width:1400px;height:1px;background:#9c9c9c;"></div>
<div class="a" style="left:493px;top:758px;width:1400px;height:1px;background:#9c9c9c;"></div>
<div class="a" style="left:493px;top:875px;width:1400px;height:1px;background:#9c9c9c;"></div>
<div class="a" style="left:493px;top:992px;width:1400px;height:1px;background:#9c9c9c;"></div>
<div class="a" style="left:959px;top:385px;width:700px;height:1px;background:#9c9c9c;"></div>
<div class="a" style="left:959px;top:548px;width:700px;height:1px;background:#9c9c9c;"></div>
<div class="a" style="left:959px;top:650px;width:700px;height:1px;background:#9c9c9c;"></div>
<div class="a" style="left:959px;top:809px;width:700px;height:1px;background:#9c9c9c;"></div>
<div class="a" style="left:959px;top:926px;width:700px;height:1px;background:#9c9c9c;"></div>
<div class="a" style="left:959px;top:1043px;width:700px;height:1px;background:#9c9c9c;"></div>
<div class="a" style="left:725px;top:335px;width:1px;height:730px;background:#9c9c9c;"></div>
<div class="a" style="left:959px;top:335px;width:1px;height:730px;background:#9c9c9c;"></div>
<div class="a" style="left:1659px;top:335px;width:1px;height:730px;background:#9c9c9c;"></div>
<div class="a" style="left:1892px;top:335px;width:1px;height:730px;background:#9c9c9c;"></div>
<div class="a" style="left:542.4px;width:600px;text-align:center;top:373.8px;font-size:17.5px;line-height:17.5px;color:#262626">Клієнти, які раніше робили</div>
<div class="a" style="left:542.4px;width:600px;text-align:center;top:396.8px;font-size:17.5px;line-height:17.5px;color:#262626">невеликі та нечасті покупки,</div>
<div class="a" style="left:542.4px;width:600px;text-align:center;top:419.8px;font-size:17.5px;line-height:17.5px;color:#262626">але вже довгий час нічого не</div>
<div class="a" style="left:542.4px;width:600px;text-align:center;top:442.8px;font-size:17.5px;line-height:17.5px;color:#262626">купували</div>
<div class="a" style="left:542.4px;width:600px;text-align:center;top:518.2px;font-size:17.5px;line-height:17.5px;color:#262626">Основні клієнти, остання</div>
<div class="a" style="left:542.4px;width:600px;text-align:center;top:541.2px;font-size:17.5px;line-height:17.5px;color:#262626">покупка яких відбулася</div>
<div class="a" style="left:542.4px;width:600px;text-align:center;top:564.2px;font-size:17.5px;line-height:17.5px;color:#262626">більше місяця тому.</div>
<div class="a" style="left:542.4px;width:600px;text-align:center;top:660.4px;font-size:17.5px;line-height:17.5px;color:#262626">Нещодавні клієнти, які</div>
<div class="a" style="left:542.4px;width:600px;text-align:center;top:683.4px;font-size:17.5px;line-height:17.5px;color:#262626">витратили хороші суми.</div>
<div class="a" style="left:542.4px;width:600px;text-align:center;top:764.3px;font-size:17.5px;line-height:17.5px;color:#262626">Потенційний лояліст кілька</div>
<div class="a" style="left:542.4px;width:600px;text-align:center;top:787.3px;font-size:17.5px;line-height:17.5px;color:#262626">місяців тому. Купує часто і в</div>
<div class="a" style="left:542.4px;width:600px;text-align:center;top:810.3px;font-size:17.5px;line-height:17.5px;color:#262626">значній кількості. Але</div>
<div class="a" style="left:542.4px;width:600px;text-align:center;top:833.3px;font-size:17.5px;line-height:17.5px;color:#262626">остання покупка була кілька</div>
<div class="a" style="left:542.4px;width:600px;text-align:center;top:856.3px;font-size:17.5px;line-height:17.5px;color:#262626">тижнів тому.</div>
<div class="a" style="left:542.4px;width:600px;text-align:center;top:927.2px;font-size:17.5px;line-height:17.5px;color:#262626">Купили зовсім недавно.</div>
<div class="a" style="left:542.4px;width:600px;text-align:center;top:1002.0px;font-size:17.5px;line-height:17.5px;color:#262626">Подібні до сегменту "Не</div>
<div class="a" style="left:542.4px;width:600px;text-align:center;top:1025.0px;font-size:17.5px;line-height:17.5px;color:#262626">можна їх втратити", але з</div>
<div class="a" style="left:542.4px;width:600px;text-align:center;top:1048.0px;font-size:17.5px;line-height:17.5px;color:#262626">меншими грошовими та</div>
<div class="a" style="left:542.4px;width:600px;text-align:center;top:1071.0px;font-size:17.5px;line-height:17.5px;color:#262626">частотними показниками.</div>
<div class="a" style="left:1476.0px;width:600px;text-align:center;top:339.4px;font-size:17px;line-height:17px;color:#262626">Включіть їх у свою</div>
<div class="a" style="left:1476.0px;width:600px;text-align:center;top:362.4px;font-size:17px;line-height:17px;color:#262626">стандартну e-mail розсилку,</div>
<div class="a" style="left:1476.0px;width:600px;text-align:center;top:385.4px;font-size:17px;line-height:17px;color:#262626">але регулярно перевіряйте,</div>
<div class="a" style="left:1476.0px;width:600px;text-align:center;top:408.4px;font-size:17px;line-height:17px;color:#262626">чи не позначають вони ваші</div>
<div class="a" style="left:1476.0px;width:600px;text-align:center;top:431.4px;font-size:17px;line-height:17px;color:#262626">листи як спам. Не</div>
<div class="a" style="left:1476.0px;width:600px;text-align:center;top:454.4px;font-size:17px;line-height:17px;color:#262626">витрачайте занадто багато</div>
<div class="a" style="left:1476.0px;width:600px;text-align:center;top:477.4px;font-size:17px;line-height:17px;color:#262626">на цей сегмент.</div>
<div class="a" style="left:1476.0px;width:600px;text-align:center;top:505.6px;font-size:17px;line-height:17px;color:#262626">Зробіть пропозиції,</div>
<div class="a" style="left:1476.0px;width:600px;text-align:center;top:528.3px;font-size:17px;line-height:17px;color:#262626">обмежені в часі. Надавайте</div>
<div class="a" style="left:1476.0px;width:600px;text-align:center;top:551.0px;font-size:17px;line-height:17px;color:#262626">персоналізовані</div>
<div class="a" style="left:1476.0px;width:600px;text-align:center;top:573.7px;font-size:17px;line-height:17px;color:#262626">рекомендації.</div>
<div class="a" style="left:1476.0px;width:600px;text-align:center;top:602.0px;font-size:21.8px;line-height:21.8px;color:#262626">Запропонуйте</div>
<div class="a" style="left:1476.0px;width:600px;text-align:center;top:624.4px;font-size:21.8px;line-height:21.8px;color:#262626">програму членства /</div>
<div class="a" style="left:1476.0px;width:600px;text-align:center;top:646.7px;font-size:21.8px;line-height:21.8px;color:#262626">лояльності. Тримайте</div>
<div class="a" style="left:1476.0px;width:600px;text-align:center;top:669.1px;font-size:21.8px;line-height:21.8px;color:#262626">їх залученими.</div>
<div class="a" style="left:1476.0px;width:600px;text-align:center;top:691.4px;font-size:21.8px;line-height:21.8px;color:#262626">Запропонуйте</div>
<div class="a" style="left:1476.0px;width:600px;text-align:center;top:713.8px;font-size:21.8px;line-height:21.8px;color:#262626">персоналізовані</div>
<div class="a" style="left:1476.0px;width:600px;text-align:center;top:736.1px;font-size:21.8px;line-height:21.8px;color:#262626">рекомендації.</div>
<div class="a" style="left:1476.0px;width:600px;text-align:center;top:764.8px;font-size:17px;line-height:17px;color:#262626">Запропонуйте їм знижкові</div>
<div class="a" style="left:1476.0px;width:600px;text-align:center;top:787.8px;font-size:17px;line-height:17px;color:#262626">купони. Поверніть їх і</div>
<div class="a" style="left:1476.0px;width:600px;text-align:center;top:810.8px;font-size:17px;line-height:17px;color:#262626">тримайте їх залученими.</div>
<div class="a" style="left:1476.0px;width:600px;text-align:center;top:833.8px;font-size:17px;line-height:17px;color:#262626">Надавайте персоналізовані</div>
<div class="a" style="left:1476.0px;width:600px;text-align:center;top:856.8px;font-size:17px;line-height:17px;color:#262626">рекомендації.</div>
<div class="a" style="left:1476.0px;width:600px;text-align:center;top:880.9px;font-size:17px;line-height:17px;color:#262626">Надавайте підтримку на</div>
<div class="a" style="left:1476.0px;width:600px;text-align:center;top:903.9px;font-size:17px;line-height:17px;color:#262626">початкових етапах роботи з</div>
<div class="a" style="left:1476.0px;width:600px;text-align:center;top:926.9px;font-size:17px;line-height:17px;color:#262626">клієнтами, надайте їм ранній</div>
<div class="a" style="left:1476.0px;width:600px;text-align:center;top:949.9px;font-size:17px;line-height:17px;color:#262626">доступ, почніть будівництво</div>
<div class="a" style="left:1476.0px;width:600px;text-align:center;top:972.9px;font-size:17px;line-height:17px;color:#262626">відносин.</div>
<div class="a" style="left:1476.0px;width:600px;text-align:center;top:1002.5px;font-size:17px;line-height:17px;color:#262626">Надайте корисні ресурси на</div>
<div class="a" style="left:1476.0px;width:600px;text-align:center;top:1025.5px;font-size:17px;line-height:17px;color:#262626">сайті. Надсилайте</div>
<div class="a" style="left:1476.0px;width:600px;text-align:center;top:1048.5px;font-size:17px;line-height:17px;color:#262626">персоналізовані електронні</div>
<div class="a" style="left:1476.0px;width:600px;text-align:center;top:1071.5px;font-size:17px;line-height:17px;color:#262626">листи.</div>
<div class="a" style="right:730.0px;top:340.0px;font-size:17.5px;line-height:17.5px;color:#262626">Кількість клієнтів</div>
<div class="a" style="right:737.0px;top:365.0px;font-size:17.5px;line-height:17.5px;color:#262626;letter-spacing:-0.6px">3,80%</div>
<div class="a" style="right:730.0px;top:405.9px;font-size:17.5px;line-height:17.5px;color:#262626">Продажі</div>
<div class="a" style="right:737.0px;top:460.6px;font-size:17.5px;line-height:17.5px;color:#262626;letter-spacing:-0.6px">1,89%</div>
<div class="a" style="right:730.0px;top:503.0px;font-size:17.5px;line-height:17.5px;color:#262626">Кількість клієнтів</div>
<div class="a" style="right:737.0px;top:527.5px;font-size:17.5px;line-height:17.5px;color:#262626;letter-spacing:-0.6px">0,25%</div>
<div class="a" style="right:730.0px;top:553.5px;font-size:17.5px;line-height:17.5px;color:#262626">Продажі</div>
<div class="a" style="right:737.0px;top:578.5px;font-size:17.5px;line-height:17.5px;color:#262626;letter-spacing:-0.6px">1,39%</div>
<div class="a" style="right:730.0px;top:605.1px;font-size:17.5px;line-height:17.5px;color:#262626">Кількість клієнтів</div>
<div class="a" style="right:737.0px;top:629.8px;font-size:17.5px;line-height:17.5px;color:#262626;letter-spacing:-0.6px">11,90%</div>
<div class="a" style="right:730.0px;top:669.4px;font-size:17.5px;line-height:17.5px;color:#262626">Продажі</div>
<div class="a" style="right:737.0px;top:723.1px;font-size:17.5px;line-height:17.5px;color:#262626;letter-spacing:-0.6px">18,98%</div>
<div class="a" style="right:730.0px;top:764.3px;font-size:17.5px;line-height:17.5px;color:#262626">Кількість клієнтів</div>
<div class="a" style="right:737.0px;top:788.7px;font-size:17.5px;line-height:17.5px;color:#262626;letter-spacing:-0.6px">35,44%</div>
<div class="a" style="right:730.0px;top:818.7px;font-size:17.5px;line-height:17.5px;color:#262626">Продажі</div>
<div class="a" style="right:737.0px;top:851.7px;font-size:17.5px;line-height:17.5px;color:#262626;letter-spacing:-0.6px">46,50%</div>
<div class="a" style="right:730.0px;top:880.4px;font-size:17.5px;line-height:17.5px;color:#262626">Кількість клієнтів</div>
<div class="a" style="right:737.0px;top:905.2px;font-size:17.5px;line-height:17.5px;color:#262626;letter-spacing:-0.6px">45,95%</div>
<div class="a" style="right:730.0px;top:935.7px;font-size:17.5px;line-height:17.5px;color:#262626">Продажі</div>
<div class="a" style="right:737.0px;top:968.4px;font-size:17.5px;line-height:17.5px;color:#262626;letter-spacing:-0.6px">28,25%</div>
<div class="a" style="right:730.0px;top:998.0px;font-size:17.5px;line-height:17.5px;color:#262626">Кількість клієнтів</div>
<div class="a" style="right:737.0px;top:1022.5px;font-size:17.5px;line-height:17.5px;color:#262626;letter-spacing:-0.6px">0,13%</div>
<div class="a" style="right:730.0px;top:1048.5px;font-size:17.5px;line-height:17.5px;color:#262626">Продажі</div>
<div class="a" style="left:1193px;top:341px;width:1px;height:39px;background:#ececec;"></div>
<div class="a" style="left:1193px;top:391px;width:1px;height:101px;background:#ececec;"></div>
<div class="a" style="left:1193px;top:503px;width:1px;height:40px;background:#ececec;"></div>
<div class="a" style="left:1193px;top:554px;width:1px;height:40px;background:#ececec;"></div>
<div class="a" style="left:1193px;top:605px;width:1px;height:40px;background:#ececec;"></div>
<div class="a" style="left:1193px;top:656px;width:1px;height:97px;background:#ececec;"></div>
<div class="a" style="left:1193px;top:764px;width:1px;height:40px;background:#ececec;"></div>
<div class="a" style="left:1193px;top:815px;width:1px;height:55px;background:#ececec;"></div>
<div class="a" style="left:1193px;top:881px;width:1px;height:40px;background:#ececec;"></div>
<div class="a" style="left:1193px;top:932px;width:1px;height:55px;background:#ececec;"></div>
<div class="a" style="left:1193px;top:998px;width:1px;height:40px;background:#ececec;"></div>
<div class="a" style="left:1193px;top:1049px;width:1px;height:11px;background:#ececec;"></div>
<div class="a" style="left:1193px;top:1049px;width:1px;height:16px;background:#9fb6cc;"></div>
<div class="a" style="left:1193px;top:339.7px;width:33.59999999999991px;height:40.10000000000002px;background:#2c5d88"></div>
<div class="a" style="left:1232.0px;top:353.5px;font-size:13px;line-height:13px;color:#262626;transform:scaleX(0.91);transform-origin:0 0">30</div>
<div class="a" style="left:1193px;top:397px;width:13px;height:88.30000000000001px;background:#2c5d88"></div>
<div class="a" style="left:1211.0px;top:434.8px;font-size:13px;line-height:13px;color:#262626;transform:scaleX(0.91);transform-origin:0 0">1 379 029</div>
<div class="a" style="left:1193px;top:503px;width:1.5px;height:39px;background:#2c5d88"></div>
<div class="a" style="left:1199.0px;top:517.5px;font-size:13px;line-height:13px;color:#262626;transform:scaleX(0.91);transform-origin:0 0">2</div>
<div class="a" style="left:1193px;top:554.3px;width:8.299999999999955px;height:39.30000000000007px;background:#2c5d88"></div>
<div class="a" style="left:1207.3px;top:568.1px;font-size:13px;line-height:13px;color:#262626;transform:scaleX(0.91);transform-origin:0 0">1 012 185</div>
<div class="a" style="left:1193px;top:605px;width:107.79999999999995px;height:39.39999999999998px;background:#2c5d88"></div>
<div class="a" style="left:1306.0px;top:618.5px;font-size:13px;line-height:13px;color:#262626;transform:scaleX(0.91);transform-origin:0 0">94</div>
<div class="a" style="left:1193px;top:661.9px;width:166.5999999999999px;height:85.39999999999998px;background:#2c5d88"></div>
<div class="a" style="left:1365.0px;top:698.5px;font-size:13px;line-height:13px;color:#262626;transform:scaleX(0.91);transform-origin:0 0">13 830 878</div>
<div class="a" style="left:1193px;top:763.7px;width:323.70000000000005px;height:39.799999999999955px;background:#2c5d88"></div>
<div class="a" style="left:1522.0px;top:777.5px;font-size:13px;line-height:13px;color:#262626;transform:scaleX(0.91);transform-origin:0 0">280</div>
<div class="a" style="left:1193px;top:816.6px;width:414px;height:51.0px;background:#2c5d88"></div>
<div class="a" style="left:1197.0px;top:835.5px;font-size:13px;line-height:13px;color:#fff;transform:scaleX(0.91);transform-origin:0 0">33 879 227</div>
<div class="a" style="left:1193px;top:881.4px;width:420.29999999999995px;height:38.80000000000007px;background:#2c5d88"></div>
<div class="a" style="left:1618.0px;top:894.5px;font-size:13px;line-height:13px;color:#262626;transform:scaleX(0.91);transform-origin:0 0">363</div>
<div class="a" style="left:1193px;top:934px;width:250px;height:50.60000000000002px;background:#2c5d88"></div>
<div class="a" style="left:1448.0px;top:952.5px;font-size:13px;line-height:13px;color:#262626;transform:scaleX(0.91);transform-origin:0 0">20 587 245</div>
<div class="a" style="left:1193px;top:1010px;width:0px;height:20px;background:#2c5d88"></div>
<div class="a" style="left:1198.0px;top:1011.5px;font-size:13px;line-height:13px;color:#262626;transform:scaleX(0.91);transform-origin:0 0">1</div>
</div>
<div class="a" style="left:1894px;top:335px;width:10px;height:465px;border-radius:5px;background:#dcdcdc"></div>
</body></html>
